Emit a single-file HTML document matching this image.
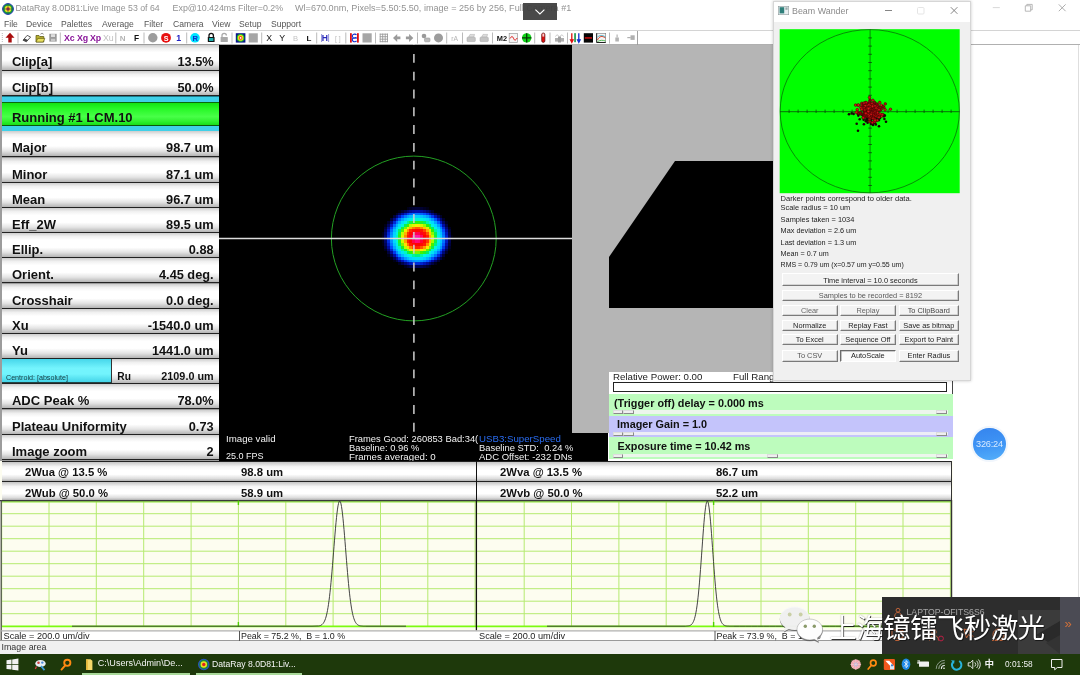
<!DOCTYPE html>
<html><head><meta charset="utf-8"><title>DataRay</title>
<style>
*{box-sizing:border-box;margin:0;padding:0}
html,body{width:1080px;height:675px;overflow:hidden;background:#fff;font-family:"Liberation Sans","Noto Sans CJK SC",sans-serif;}
.abs{position:absolute}
#root{position:relative;width:1080px;height:675px;overflow:hidden;background:#fff;filter:blur(0.35px)}
/* title */
.tt{top:2.300px;color:#929292;white-space:pre;line-height:12px}
#menu{left:0;top:18px;height:12px;font-size:8.6px;color:#555;white-space:pre;line-height:12px}
#menu span{position:absolute;top:0}
#tb{left:0;top:30px;width:1080px;height:15px;background:#fff;border-top:1px solid #d4d4d4;border-bottom:1px solid #b0b0b0}
/* left panel */
.row{position:absolute;left:1.7px;width:217.2px;height:25.4px;border-bottom:1.6px solid #222;
 background:linear-gradient(#cdcdcd 0%,#f0f0f0 14%,#fff 30%,#fff 60%,#e4e4e4 80%,#b4b4b4 100%);
 font-weight:bold;font-size:13px;color:#111;line-height:15px}
.row b{position:absolute;left:10.3px;top:9px}
.row i{position:absolute;right:5.3px;top:9px;font-style:normal;font-size:12.75px}
.ct{white-space:pre;line-height:11px}
.wrow{border-top:1.4px solid #222;background:linear-gradient(#c4c4c4 0%,#f6f6f6 25%,#fff 45%,#fff 65%,#dcdcdc 88%,#b0b0b0 100%);font-weight:bold;font-size:11.3px;line-height:13px;color:#111;white-space:pre}
.wb{background:#f3f3f3;border:1px solid #fff;border-right-color:#7a7a7a;border-bottom-color:#7a7a7a;box-shadow:inset -0.6px -0.6px 0 #b5b5b5;font-size:7.4px;text-align:center;white-space:pre}
.wb.sk{background:#fafafa;border-color:#6a6a6a #fff #fff #6a6a6a;box-shadow:inset 0.6px 0.6px 0 #999}
</style></head><body><div id="root">
<svg class="abs" style="left:1.500px;top:2.500px" width="12" height="12" viewBox="0 0 12 12"><circle cx="6" cy="6" r="5.400" fill="#1a9a30" stroke="#2038b8" stroke-width="1"/><circle cx="6" cy="6" r="3.300" fill="#e8e020"/><circle cx="6" cy="6" r="1.800" fill="#e02818"/><path d="M6 .5v11M.5 6h11" stroke="#103080" stroke-width=".5"/></svg>
<span class="abs tt" style="left:15.500px;font-size:8.780px">DataRay 8.0D81:Live Image 53 of 64</span><span class="abs tt" style="left:172.600px;font-size:8.860px">Exp@10.424ms Filter=0.2%</span><span class="abs tt" style="left:295px;font-size:9.110px">Wl=670.0nm, Pixels=5.50:5.50, image = 256 by 256, Full Camera #1</span>
<div class="abs" style="left:523.100px;top:3.300px;width:34px;height:16.500px;background:rgba(62,62,62,.94)"></div>
<svg class="abs" style="left:523px;top:3px" width="34" height="17" viewBox="523 3 34 17"><path d="M535.400 9.600l4.500 4.400 4.500-4.400" fill="none" stroke="#fff" stroke-width="1.100"/></svg>
<svg class="abs" style="left:985px;top:0" width="95" height="16" viewBox="985 0 95 16" fill="none"><path d="M992.800 7.600h7" stroke="#d4d4d4" stroke-width=".9"/><path d="M1025.300 5.800h5.400v5.400h-5.400zM1026.800 5.800v-1.400h5.400v5.400h-1.500" stroke="#b0b0b0" stroke-width=".9"/><path d="M1058.800 4.400l6.800 6.800M1065.600 4.400l-6.800 6.800" stroke="#a4a4a4" stroke-width=".9"/></svg>
<div id="menu" class="abs"><span style="left:4px">File</span><span style="left:26px">Device</span><span style="left:61px">Palettes</span><span style="left:102px">Average</span><span style="left:144px">Filter</span><span style="left:173px">Camera</span><span style="left:212px">View</span><span style="left:239px">Setup</span><span style="left:271px">Support</span></div>
<div id="tb" class="abs"></div>
<svg class="abs" style="left:0;top:31px" width="640" height="14" viewBox="0 31 640 14" font-family="Liberation Sans, sans-serif"><path d="M18.0 32.500v11M60.3 32.500v11M115.8 32.500v11M144.0 32.500v11M186.7 32.500v11M232.0 32.500v11M261.7 32.500v11M316.7 32.500v11M345.8 32.500v11M375.5 32.500v11M417.5 32.500v11M446.7 32.500v11M462.5 32.500v11M492.5 32.500v11M534.7 32.500v11M550.0 32.500v11M567.5 32.500v11M609.5 32.500v11" stroke="#a8a8a8" stroke-width="0.8" fill="none"/><path d="M637.500 31v14" stroke="#999" stroke-width="0.9"/><path d="M2.300 33v10" stroke="#bbb" stroke-width="1" stroke-dasharray="1 1"/><path d="M10 32.800l4.500 5h-2.800v4.800h-3.400v-4.800h-2.800z" fill="#a80c0c"/><path d="M23 40.200l4.200-4.800 3.400 1.600-4.200 4.800z" fill="#fff" stroke="#333" stroke-width=".8"/><path d="M23 40.200l1.600-1.800 3.400 1.600-1.600 1.800z" fill="#444"/><path d="M36 35.500h3l.8 1h4v5.500h-7.800z" fill="#b8b030" stroke="#55500a" stroke-width=".7"/><path d="M36 42l1.800-3.600h7l-1.600 3.600z" fill="#e8e060" stroke="#55500a" stroke-width=".6"/><path d="M40.500 34.200c1-1 2.200-1 3 0" stroke="#333" stroke-width=".6" fill="none"/><rect x="49.300" y="33.800" width="7.400" height="7.800" fill="#9a9a9a"/><rect x="51" y="34.200" width="4" height="2.800" fill="#ddd"/><rect x="51" y="38.800" width="4.200" height="2.800" fill="#c8c8c8"/><text x="64" y="41" font-size="8.8" font-weight="bold" fill="#8a169a" >Xc</text><text x="77" y="41" font-size="8.8" font-weight="bold" fill="#8a169a" >Xg</text><text x="90" y="41" font-size="8.8" font-weight="bold" fill="#8a169a" >Xp</text><text x="103" y="41" font-size="8.8" font-weight="normal" fill="#c0c0c0" >Xu</text><text x="119.8" y="41" font-size="8" font-weight="bold" fill="#b4b4b4" >N</text><text x="134" y="41" font-size="8.4" font-weight="bold" fill="#111" >F</text><circle cx="152.800" cy="37.800" r="4.700" fill="#9c9c9c"/><circle cx="166" cy="37.800" r="4.900" fill="#e81010"/><text x="163.8" y="40.5" font-size="7.2" font-weight="bold" fill="#fff" >S</text><text x="176.3" y="41" font-size="8.8" font-weight="bold" fill="#2222c4" >1</text><circle cx="195" cy="37.800" r="4.800" fill="#00e4ff"/><text x="192.4" y="40.8" font-size="7.6" font-weight="bold" fill="#1030d0" >R</text><path d="M209 37v-1.500a2.200 2.200 0 0 1 4.400 0v1.500" fill="none" stroke="#111" stroke-width="1.300"/><rect x="207.800" y="37" width="6.800" height="5" rx=".6" fill="#111"/><rect x="209" y="38" width="4.400" height="3" fill="#20b0b0"/><path d="M222 37v-1.500a2.200 2.200 0 0 1 4.400 0" fill="none" stroke="#aaa" stroke-width="1.300"/><rect x="220.600" y="37" width="7.200" height="5" rx=".6" fill="#a8a8a8"/><rect x="235.800" y="33.200" width="9.600" height="9.400" fill="#0a1a8a"/><circle cx="240.600" cy="37.900" r="3.800" fill="#20c020"/><circle cx="240.600" cy="37.900" r="2.800" fill="#f0e020"/><circle cx="240.600" cy="37.900" r="1.800" fill="#f04020"/><circle cx="240.600" cy="37.900" r=".900" fill="#fff"/><rect x="248.700" y="33.300" width="9.100" height="9.200" fill="#a6a6a6"/><text x="266.3" y="41.2" font-size="8.8" font-weight="normal" fill="#111" >X</text><text x="279.3" y="41.2" font-size="8.8" font-weight="normal" fill="#111" >Y</text><text x="293" y="41" font-size="7.6" font-weight="normal" fill="#c4c4c4" >B</text><text x="306.6" y="41" font-size="8" font-weight="bold" fill="#111" >L</text><text x="321.8" y="41" font-size="8.6" font-weight="bold" fill="#2828b8" >H</text><path d="M321.600 34v8M328.600 34v8" stroke="#2828b8" stroke-width=".5"/><text x="335" y="40.5" font-size="6.8" font-weight="normal" fill="#bbb" >[ ]</text><rect x="350" y="33.200" width="1.800" height="9.400" fill="#e01010"/><rect x="357" y="33.200" width="1.800" height="9.400" fill="#e01010"/><path d="M356.500 35a2.300 2 0 1 0 0 2.200M356.500 38.600a2.300 2 0 1 0 0 2.200" stroke="#1030d0" stroke-width="1.100" fill="none"/><rect x="362.500" y="33.300" width="9.200" height="9.200" fill="#a6a6a6"/><path d="M380.200 33.600v8.600M382.700 33.600v8.600M385.200 33.600v8.600M387.500 33.600v8.600M379.800 34.200h8M379.800 36.700h8M379.800 39.200h8M379.800 41.700h8" stroke="#9a9a9a" stroke-width=".9"/><path d="M393 37.900l4.200-4v2.600h3.200v2.800h-3.200v2.600z" fill="#9a9a9a"/><path d="M413.300 37.900l-4.200-4v2.600h-3.200v2.800h3.200v2.600z" fill="#9a9a9a"/><circle cx="424" cy="36" r="2.300" fill="#9a9a9a"/><rect x="424.500" y="38" width="5.500" height="3.800" rx="1" fill="#bbb" stroke="#999" stroke-width=".6"/><circle cx="438.500" cy="37.900" r="4.500" fill="#9c9c9c"/><text x="451.3" y="40.5" font-size="6.8" font-weight="normal" fill="#b4b4b4" >rA</text><path d="M468.5 37.200l1.500-2.800h4.600l-1 2.800z" fill="#ddd" stroke="#aaa" stroke-width=".5"/><rect x="467" y="37.200" width="8.300" height="4.400" rx=".8" fill="#c4c4c4" stroke="#a0a0a0" stroke-width=".5"/><path d="M481.5 37.200l1.500-2.800h4.600l-1 2.800z" fill="#ddd" stroke="#aaa" stroke-width=".5"/><rect x="480" y="37.200" width="8.300" height="4.400" rx=".8" fill="#c4c4c4" stroke="#a0a0a0" stroke-width=".5"/><text x="496.8" y="40.8" font-size="7.4" font-weight="bold" fill="#111" >M2</text><rect x="509.200" y="33.400" width="8.400" height="9" fill="#f4f4f4" stroke="#999" stroke-width=".7"/><path d="M510 38.500c1.500-2.500 2.600-2.500 3.600 0s2.200 1.800 3.500-.5" stroke="#e01010" stroke-width="1" fill="none"/><circle cx="526.700" cy="37.900" r="4.700" fill="#10d418"/><path d="M522 37.900h9.400M526.700 33.200v9.400" stroke="#083808" stroke-width="1.300"/><rect x="541.700" y="33" width="3.200" height="9.400" rx="1.600" fill="#e01010" stroke="#501010" stroke-width=".7"/><rect x="542.400" y="33.600" width="1.800" height="3" fill="#f8d0d0"/><rect x="555" y="38" width="9" height="3.600" fill="#b0b0b0"/><path d="M555.500 36.500c1-2 2.500-2 3.500 0M560 36.500c1-2 2.500-2 3.500 0" stroke="#b8b8b8" stroke-width=".8" fill="none"/><rect x="558" y="36.500" width="3" height="6" fill="#a0a0a0"/><path d="M571.800 33.200v7.600M570.500 39.800l1.300 2.600 1.300-2.600z" stroke="#e01010" stroke-width="1.300" fill="#e01010"/><path d="M575.500 33.200v9M574.600 33.200v9" stroke="#209a50" stroke-width=".9"/><path d="M578.800 33.200v7.600M577.500 39.800l1.300 2.600 1.300-2.600z" stroke="#1030d0" stroke-width="1.300" fill="#1030d0"/><rect x="583.800" y="33.200" width="9.200" height="9.400" fill="#050505"/><rect x="584.800" y="37.300" width="7.200" height="1.300" fill="#f01010"/><rect x="596.700" y="33.300" width="9" height="9.200" fill="#f4f4f4" stroke="#777" stroke-width=".6"/><path d="M596.700 33.300v9.200h9" stroke="#111" stroke-width=".9" fill="none"/><path d="M597.500 40c2-4 4.500-4.500 8-2" stroke="#e03010" stroke-width=".9" fill="none"/><path d="M597.500 37c2.500-2 5-2 8 0" stroke="#20a0c0" stroke-width=".8" fill="none"/><path d="M597.500 41.500c3-1.500 5-1.500 8-.5" stroke="#30b030" stroke-width=".8" fill="none"/><rect x="615.300" y="37.500" width="3.600" height="4" fill="#b4b4b4"/><rect x="616.500" y="34.500" width="1.200" height="3" fill="#b4b4b4"/><rect x="630.500" y="35.300" width="4.200" height="4.600" fill="#b0b0b0"/><rect x="627.300" y="37" width="3.400" height="1.200" fill="#b0b0b0"/></svg>
<!--LEFT-->
<div class="abs" style="left:0;top:44px;width:220px;height:417px;background:#9c9c9c"></div>
<div class="row" style="top:45.3px;height:25.6px"><b>Clip[a]</b><i>13.5%</i></div>
<div class="row" style="top:70.9px;height:25.5px"><b>Clip[b]</b><i>50.0%</i></div>
<div class="abs" style="left:1.7px;top:96.4px;width:217.2px;height:34.9px;background:#3fd0e8;border-top:1px solid #1a7f8f"></div>
<div class="abs" id="run" style="left:1.7px;top:101.7px;width:217.2px;height:24.6px;background:linear-gradient(#14e214,#26f826 25%,#48ff48 62%,#2cf02c 85%,#18dc18);border-top:1px solid #0a6a0a;border-bottom:1.5px solid #0a5a0a;font-weight:bold;font-size:13px;line-height:15px;color:#111"><span class="abs" style="left:10.3px;top:7.6px">Running #1 LCM.10</span></div>
<div class="row" style="top:131.3px;height:26.2px"><b>Major</b><i>98.7 um</i></div>
<div class="row" style="top:157.5px;height:25.2px"><b>Minor</b><i>87.1 um</i></div>
<div class="row" style="top:182.7px;height:25.2px"><b>Mean</b><i>96.7 um</i></div>
<div class="row" style="top:207.9px;height:25.2px"><b>Eff_2W</b><i>89.5 um</i></div>
<div class="row" style="top:233.1px;height:25.2px"><b>Ellip.</b><i>0.88</i></div>
<div class="row" style="top:258.3px;height:25.2px"><b>Orient.</b><i>4.45 deg.</i></div>
<div class="row" style="top:283.5px;height:25.2px"><b>Crosshair</b><i>0.0 deg.</i></div>
<div class="row" style="top:308.7px;height:25.2px"><b>Xu</b><i>-1540.0 um</i></div>
<div class="row" style="top:333.9px;height:25.2px"><b>Yu</b><i>1441.0 um</i></div>
<div class="row" style="top:359.1px;height:25.2px"><i style="font-size:10.8px;top:10px">2109.0 um</i><span class="abs" style="left:115.6px;top:10px;font-size:10.2px">Ru</span></div>
<div class="abs" style="left:1.7px;top:359.1px;width:110.3px;height:24.0px;background:linear-gradient(#46d6ea,#74f4fd 40%,#72f4fd 65%,#44d4e8);border-right:1.3px solid #333;border-bottom:1.3px solid #244"><span class="abs" style="left:4.3px;top:15.4px;font-size:7.15px;line-height:9px;color:#143a40;white-space:pre">Centroid: [absolute]</span></div>
<div class="row" style="top:384.3px;height:25.2px"><b>ADC Peak %</b><i>78.0%</i></div>
<div class="row" style="top:409.5px;height:25.2px"><b>Plateau Uniformity</b><i>0.73</i></div>
<div class="row" style="top:434.7px;height:25.2px"><b>Image zoom</b><i>2</i></div>
<!--/LEFT-->
<!--CAM-->
<div class="abs" style="left:219px;top:44.5px;width:353px;height:417px;background:#000"></div>
<div class="abs" style="left:219px;top:432.5px;width:389px;height:29px;background:#000"></div>
<svg class="abs" style="left:219px;top:44px" width="353" height="390" viewBox="219 44 353 390">
<defs><radialGradient id="beam" cx="0.5" cy="0.5" r="0.5">
<stop offset="0" stop-color="#ff10b0"/><stop offset="0.15" stop-color="#ff0078"/><stop offset="0.25" stop-color="#ff0000"/>
<stop offset="0.34" stop-color="#ff4800"/><stop offset="0.43" stop-color="#ffd800"/><stop offset="0.49" stop-color="#c8ff00"/>
<stop offset="0.56" stop-color="#20f020"/><stop offset="0.63" stop-color="#00f0b0"/><stop offset="0.70" stop-color="#00e0ff"/>
<stop offset="0.79" stop-color="#00a8ff"/><stop offset="0.86" stop-color="#0050ff"/><stop offset="0.92" stop-color="#0018b0"/><stop offset="1" stop-color="#000040" stop-opacity="0"/>
</radialGradient></defs>
<g shape-rendering="crispEdges"><rect x="406.53" y="207.21" width="2.800" height="2.800" fill="#000019"/><rect x="409.29" y="207.21" width="2.800" height="2.800" fill="#000127"/><rect x="412.05" y="207.21" width="2.800" height="2.800" fill="#000134"/><rect x="414.80" y="207.21" width="2.800" height="2.800" fill="#00023a"/><rect x="417.56" y="207.21" width="2.800" height="2.800" fill="#000239"/><rect x="420.32" y="207.21" width="2.800" height="2.800" fill="#000131"/><rect x="423.08" y="207.21" width="2.800" height="2.800" fill="#000023"/><rect x="425.84" y="207.21" width="2.800" height="2.800" fill="#000016"/><rect x="398.26" y="209.97" width="2.800" height="2.800" fill="#000013"/><rect x="401.02" y="209.97" width="2.800" height="2.800" fill="#000130"/><rect x="403.77" y="209.97" width="2.800" height="2.800" fill="#000352"/><rect x="406.53" y="209.97" width="2.800" height="2.800" fill="#000775"/><rect x="409.29" y="209.97" width="2.800" height="2.800" fill="#000b93"/><rect x="412.05" y="209.97" width="2.800" height="2.800" fill="#000da7"/><rect x="414.80" y="209.97" width="2.800" height="2.800" fill="#000fb0"/><rect x="417.56" y="209.97" width="2.800" height="2.800" fill="#000eaf"/><rect x="420.32" y="209.97" width="2.800" height="2.800" fill="#000da3"/><rect x="423.08" y="209.97" width="2.800" height="2.800" fill="#000a8c"/><rect x="425.84" y="209.97" width="2.800" height="2.800" fill="#00066c"/><rect x="428.59" y="209.97" width="2.800" height="2.800" fill="#000349"/><rect x="431.35" y="209.97" width="2.800" height="2.800" fill="#000126"/><rect x="395.50" y="212.73" width="2.800" height="2.800" fill="#000128"/><rect x="398.26" y="212.73" width="2.800" height="2.800" fill="#000458"/><rect x="401.02" y="212.73" width="2.800" height="2.800" fill="#000b93"/><rect x="403.77" y="212.73" width="2.800" height="2.800" fill="#001ec6"/><rect x="406.53" y="212.73" width="2.800" height="2.800" fill="#003bef"/><rect x="409.29" y="212.73" width="2.800" height="2.800" fill="#0055ff"/><rect x="412.05" y="212.73" width="2.800" height="2.800" fill="#006aff"/><rect x="414.80" y="212.73" width="2.800" height="2.800" fill="#0073ff"/><rect x="417.56" y="212.73" width="2.800" height="2.800" fill="#0072ff"/><rect x="420.32" y="212.73" width="2.800" height="2.800" fill="#0065ff"/><rect x="423.08" y="212.73" width="2.800" height="2.800" fill="#004eff"/><rect x="425.84" y="212.73" width="2.800" height="2.800" fill="#0034e5"/><rect x="428.59" y="212.73" width="2.800" height="2.800" fill="#0016ba"/><rect x="431.35" y="212.73" width="2.800" height="2.800" fill="#000984"/><rect x="434.11" y="212.73" width="2.800" height="2.800" fill="#00034b"/><rect x="436.87" y="212.73" width="2.800" height="2.800" fill="#00001c"/><rect x="392.74" y="215.48" width="2.800" height="2.800" fill="#000239"/><rect x="395.50" y="215.48" width="2.800" height="2.800" fill="#00087a"/><rect x="398.26" y="215.48" width="2.800" height="2.800" fill="#001bc1"/><rect x="401.02" y="215.48" width="2.800" height="2.800" fill="#0047ff"/><rect x="403.77" y="215.48" width="2.800" height="2.800" fill="#007dff"/><rect x="406.53" y="215.48" width="2.800" height="2.800" fill="#00a3ff"/><rect x="409.29" y="215.48" width="2.800" height="2.800" fill="#00baff"/><rect x="412.05" y="215.48" width="2.800" height="2.800" fill="#00c9ff"/><rect x="414.80" y="215.48" width="2.800" height="2.800" fill="#00d0ff"/><rect x="417.56" y="215.48" width="2.800" height="2.800" fill="#00cfff"/><rect x="420.32" y="215.48" width="2.800" height="2.800" fill="#00c6ff"/><rect x="423.08" y="215.48" width="2.800" height="2.800" fill="#00b4ff"/><rect x="425.84" y="215.48" width="2.800" height="2.800" fill="#009cff"/><rect x="428.59" y="215.48" width="2.800" height="2.800" fill="#006fff"/><rect x="431.35" y="215.48" width="2.800" height="2.800" fill="#003bf0"/><rect x="434.11" y="215.48" width="2.800" height="2.800" fill="#000fb0"/><rect x="436.87" y="215.48" width="2.800" height="2.800" fill="#000565"/><rect x="439.62" y="215.48" width="2.800" height="2.800" fill="#000129"/><rect x="389.98" y="218.24" width="2.800" height="2.800" fill="#00023a"/><rect x="392.74" y="218.24" width="2.800" height="2.800" fill="#000986"/><rect x="395.50" y="218.24" width="2.800" height="2.800" fill="#002bd8"/><rect x="398.26" y="218.24" width="2.800" height="2.800" fill="#006aff"/><rect x="401.02" y="218.24" width="2.800" height="2.800" fill="#00a5ff"/><rect x="403.77" y="218.24" width="2.800" height="2.800" fill="#00ccff"/><rect x="406.53" y="218.24" width="2.800" height="2.800" fill="#00e2f4"/><rect x="409.29" y="218.24" width="2.800" height="2.800" fill="#00efe7"/><rect x="412.05" y="218.24" width="2.800" height="2.800" fill="#00f8de"/><rect x="414.80" y="218.24" width="2.800" height="2.800" fill="#00f9d2"/><rect x="417.56" y="218.24" width="2.800" height="2.800" fill="#00f9d6"/><rect x="420.32" y="218.24" width="2.800" height="2.800" fill="#00f6e0"/><rect x="423.08" y="218.24" width="2.800" height="2.800" fill="#00ecea"/><rect x="425.84" y="218.24" width="2.800" height="2.800" fill="#00def8"/><rect x="428.59" y="218.24" width="2.800" height="2.800" fill="#00c3ff"/><rect x="431.35" y="218.24" width="2.800" height="2.800" fill="#009aff"/><rect x="434.11" y="218.24" width="2.800" height="2.800" fill="#0057ff"/><rect x="436.87" y="218.24" width="2.800" height="2.800" fill="#001cc4"/><rect x="439.62" y="218.24" width="2.800" height="2.800" fill="#00066f"/><rect x="442.38" y="218.24" width="2.800" height="2.800" fill="#000129"/><rect x="387.23" y="221.00" width="2.800" height="2.800" fill="#00012b"/><rect x="389.98" y="221.00" width="2.800" height="2.800" fill="#00087b"/><rect x="392.74" y="221.00" width="2.800" height="2.800" fill="#002ad7"/><rect x="395.50" y="221.00" width="2.800" height="2.800" fill="#0074ff"/><rect x="398.26" y="221.00" width="2.800" height="2.800" fill="#00b4ff"/><rect x="401.02" y="221.00" width="2.800" height="2.800" fill="#00def8"/><rect x="403.77" y="221.00" width="2.800" height="2.800" fill="#00f4e2"/><rect x="406.53" y="221.00" width="2.800" height="2.800" fill="#00f491"/><rect x="409.29" y="221.00" width="2.800" height="2.800" fill="#0ef047"/><rect x="412.05" y="221.00" width="2.800" height="2.800" fill="#22f021"/><rect x="414.80" y="221.00" width="2.800" height="2.800" fill="#2bf00e"/><rect x="417.56" y="221.00" width="2.800" height="2.800" fill="#2af011"/><rect x="420.32" y="221.00" width="2.800" height="2.800" fill="#1ef029"/><rect x="423.08" y="221.00" width="2.800" height="2.800" fill="#08f055"/><rect x="425.84" y="221.00" width="2.800" height="2.800" fill="#00f6ad"/><rect x="428.59" y="221.00" width="2.800" height="2.800" fill="#00eee8"/><rect x="431.35" y="221.00" width="2.800" height="2.800" fill="#00d8fe"/><rect x="434.11" y="221.00" width="2.800" height="2.800" fill="#00a7ff"/><rect x="436.87" y="221.00" width="2.800" height="2.800" fill="#005eff"/><rect x="439.62" y="221.00" width="2.800" height="2.800" fill="#001ac0"/><rect x="442.38" y="221.00" width="2.800" height="2.800" fill="#000561"/><rect x="445.14" y="221.00" width="2.800" height="2.800" fill="#00001b"/><rect x="384.47" y="223.76" width="2.800" height="2.800" fill="#000016"/><rect x="387.23" y="223.76" width="2.800" height="2.800" fill="#000459"/><rect x="389.98" y="223.76" width="2.800" height="2.800" fill="#0019bf"/><rect x="392.74" y="223.76" width="2.800" height="2.800" fill="#0065ff"/><rect x="395.50" y="223.76" width="2.800" height="2.800" fill="#00b2ff"/><rect x="398.26" y="223.76" width="2.800" height="2.800" fill="#00e1f5"/><rect x="401.02" y="223.76" width="2.800" height="2.800" fill="#00f9d3"/><rect x="403.77" y="223.76" width="2.800" height="2.800" fill="#0cf04c"/><rect x="406.53" y="223.76" width="2.800" height="2.800" fill="#3df100"/><rect x="409.29" y="223.76" width="2.800" height="2.800" fill="#b8fe00"/><rect x="412.05" y="223.76" width="2.800" height="2.800" fill="#e3f400"/><rect x="414.80" y="223.76" width="2.800" height="2.800" fill="#f7ee00"/><rect x="417.56" y="223.76" width="2.800" height="2.800" fill="#f4ee00"/><rect x="420.32" y="223.76" width="2.800" height="2.800" fill="#dbf600"/><rect x="423.08" y="223.76" width="2.800" height="2.800" fill="#9bfb00"/><rect x="425.84" y="223.76" width="2.800" height="2.800" fill="#2bf00e"/><rect x="428.59" y="223.76" width="2.800" height="2.800" fill="#00f063"/><rect x="431.35" y="223.76" width="2.800" height="2.800" fill="#00f5e1"/><rect x="434.11" y="223.76" width="2.800" height="2.800" fill="#00d9fd"/><rect x="436.87" y="223.76" width="2.800" height="2.800" fill="#00a2ff"/><rect x="439.62" y="223.76" width="2.800" height="2.800" fill="#004cff"/><rect x="442.38" y="223.76" width="2.800" height="2.800" fill="#000da5"/><rect x="445.14" y="223.76" width="2.800" height="2.800" fill="#000345"/><rect x="384.47" y="226.52" width="2.800" height="2.800" fill="#000132"/><rect x="387.23" y="226.52" width="2.800" height="2.800" fill="#000a8e"/><rect x="389.98" y="226.52" width="2.800" height="2.800" fill="#0040f6"/><rect x="392.74" y="226.52" width="2.800" height="2.800" fill="#009dff"/><rect x="395.50" y="226.52" width="2.800" height="2.800" fill="#00dafc"/><rect x="398.26" y="226.52" width="2.800" height="2.800" fill="#00f9dd"/><rect x="401.02" y="226.52" width="2.800" height="2.800" fill="#10f044"/><rect x="403.77" y="226.52" width="2.800" height="2.800" fill="#78f700"/><rect x="406.53" y="226.52" width="2.800" height="2.800" fill="#eff000"/><rect x="409.29" y="226.52" width="2.800" height="2.800" fill="#ffb200"/><rect x="412.05" y="226.52" width="2.800" height="2.800" fill="#ff7a00"/><rect x="414.80" y="226.52" width="2.800" height="2.800" fill="#ff5a00"/><rect x="417.56" y="226.52" width="2.800" height="2.800" fill="#ff5f00"/><rect x="420.32" y="226.52" width="2.800" height="2.800" fill="#ff8700"/><rect x="423.08" y="226.52" width="2.800" height="2.800" fill="#ffc400"/><rect x="425.84" y="226.52" width="2.800" height="2.800" fill="#dbf600"/><rect x="428.59" y="226.52" width="2.800" height="2.800" fill="#46f200"/><rect x="431.35" y="226.52" width="2.800" height="2.800" fill="#02f061"/><rect x="434.11" y="226.52" width="2.800" height="2.800" fill="#00f1e5"/><rect x="436.87" y="226.52" width="2.800" height="2.800" fill="#00ccff"/><rect x="439.62" y="226.52" width="2.800" height="2.800" fill="#0087ff"/><rect x="442.38" y="226.52" width="2.800" height="2.800" fill="#002ddc"/><rect x="445.14" y="226.52" width="2.800" height="2.800" fill="#000772"/><rect x="447.90" y="226.52" width="2.800" height="2.800" fill="#00001e"/><rect x="384.47" y="229.27" width="2.800" height="2.800" fill="#00034d"/><rect x="387.23" y="229.27" width="2.800" height="2.800" fill="#0015b9"/><rect x="389.98" y="229.27" width="2.800" height="2.800" fill="#0069ff"/><rect x="392.74" y="229.27" width="2.800" height="2.800" fill="#00bdff"/><rect x="395.50" y="229.27" width="2.800" height="2.800" fill="#00ebeb"/><rect x="398.26" y="229.27" width="2.800" height="2.800" fill="#00f16d"/><rect x="401.02" y="229.27" width="2.800" height="2.800" fill="#53f300"/><rect x="403.77" y="229.27" width="2.800" height="2.800" fill="#f2ef00"/><rect x="406.53" y="229.27" width="2.800" height="2.800" fill="#ff9200"/><rect x="409.29" y="229.27" width="2.800" height="2.800" fill="#ff2b00"/><rect x="412.05" y="229.27" width="2.800" height="2.800" fill="#ff1100"/><rect x="414.80" y="229.27" width="2.800" height="2.800" fill="#ff0900"/><rect x="417.56" y="229.27" width="2.800" height="2.800" fill="#ff0a00"/><rect x="420.32" y="229.27" width="2.800" height="2.800" fill="#ff1400"/><rect x="423.08" y="229.27" width="2.800" height="2.800" fill="#ff4400"/><rect x="425.84" y="229.27" width="2.800" height="2.800" fill="#ffac00"/><rect x="428.59" y="229.27" width="2.800" height="2.800" fill="#d8f700"/><rect x="431.35" y="229.27" width="2.800" height="2.800" fill="#2bf00e"/><rect x="434.11" y="229.27" width="2.800" height="2.800" fill="#00f5a1"/><rect x="436.87" y="229.27" width="2.800" height="2.800" fill="#00e3f3"/><rect x="439.62" y="229.27" width="2.800" height="2.800" fill="#00abff"/><rect x="442.38" y="229.27" width="2.800" height="2.800" fill="#004dff"/><rect x="445.14" y="229.27" width="2.800" height="2.800" fill="#000c9b"/><rect x="447.90" y="229.27" width="2.800" height="2.800" fill="#000238"/><rect x="381.71" y="232.03" width="2.800" height="2.800" fill="#000017"/><rect x="384.47" y="232.03" width="2.800" height="2.800" fill="#000564"/><rect x="387.23" y="232.03" width="2.800" height="2.800" fill="#0028d5"/><rect x="389.98" y="232.03" width="2.800" height="2.800" fill="#0088ff"/><rect x="392.74" y="232.03" width="2.800" height="2.800" fill="#00d3ff"/><rect x="395.50" y="232.03" width="2.800" height="2.800" fill="#00f8de"/><rect x="398.26" y="232.03" width="2.800" height="2.800" fill="#19f032"/><rect x="401.02" y="232.03" width="2.800" height="2.800" fill="#c3fd00"/><rect x="403.77" y="232.03" width="2.800" height="2.800" fill="#ffb200"/><rect x="406.53" y="232.03" width="2.800" height="2.800" fill="#ff3000"/><rect x="409.29" y="232.03" width="2.800" height="2.800" fill="#ff0900"/><rect x="412.05" y="232.03" width="2.800" height="2.800" fill="#ff002b"/><rect x="414.80" y="232.03" width="2.800" height="2.800" fill="#ff0355"/><rect x="417.56" y="232.03" width="2.800" height="2.800" fill="#ff034e"/><rect x="420.32" y="232.03" width="2.800" height="2.800" fill="#ff0019"/><rect x="423.08" y="232.03" width="2.800" height="2.800" fill="#ff0f00"/><rect x="425.84" y="232.03" width="2.800" height="2.800" fill="#ff5300"/><rect x="428.59" y="232.03" width="2.800" height="2.800" fill="#ffd200"/><rect x="431.35" y="232.03" width="2.800" height="2.800" fill="#89f900"/><rect x="434.11" y="232.03" width="2.800" height="2.800" fill="#07f055"/><rect x="436.87" y="232.03" width="2.800" height="2.800" fill="#00efe7"/><rect x="439.62" y="232.03" width="2.800" height="2.800" fill="#00c1ff"/><rect x="442.38" y="232.03" width="2.800" height="2.800" fill="#006cff"/><rect x="445.14" y="232.03" width="2.800" height="2.800" fill="#0014b8"/><rect x="447.90" y="232.03" width="2.800" height="2.800" fill="#00034b"/><rect x="381.71" y="234.79" width="2.800" height="2.800" fill="#00001b"/><rect x="384.47" y="234.79" width="2.800" height="2.800" fill="#000773"/><rect x="387.23" y="234.79" width="2.800" height="2.800" fill="#0033e4"/><rect x="389.98" y="234.79" width="2.800" height="2.800" fill="#0098ff"/><rect x="392.74" y="234.79" width="2.800" height="2.800" fill="#00dbfb"/><rect x="395.50" y="234.79" width="2.800" height="2.800" fill="#00f8be"/><rect x="398.26" y="234.79" width="2.800" height="2.800" fill="#28f013"/><rect x="401.02" y="234.79" width="2.800" height="2.800" fill="#e3f400"/><rect x="403.77" y="234.79" width="2.800" height="2.800" fill="#ff8800"/><rect x="406.53" y="234.79" width="2.800" height="2.800" fill="#ff1600"/><rect x="409.29" y="234.79" width="2.800" height="2.800" fill="#ff0019"/><rect x="412.05" y="234.79" width="2.800" height="2.800" fill="#ff0778"/><rect x="414.80" y="234.79" width="2.800" height="2.800" fill="#ff18a9"/><rect x="417.56" y="234.79" width="2.800" height="2.800" fill="#ff13a3"/><rect x="420.32" y="234.79" width="2.800" height="2.800" fill="#ff0560"/><rect x="423.08" y="234.79" width="2.800" height="2.800" fill="#ff0000"/><rect x="425.84" y="234.79" width="2.800" height="2.800" fill="#ff1d00"/><rect x="428.59" y="234.79" width="2.800" height="2.800" fill="#ffaa00"/><rect x="431.35" y="234.79" width="2.800" height="2.800" fill="#c4fd00"/><rect x="434.11" y="234.79" width="2.800" height="2.800" fill="#16f037"/><rect x="436.87" y="234.79" width="2.800" height="2.800" fill="#00f6e0"/><rect x="439.62" y="234.79" width="2.800" height="2.800" fill="#00cdff"/><rect x="442.38" y="234.79" width="2.800" height="2.800" fill="#007cff"/><rect x="445.14" y="234.79" width="2.800" height="2.800" fill="#001fc7"/><rect x="447.90" y="234.79" width="2.800" height="2.800" fill="#000456"/><rect x="450.66" y="234.79" width="2.800" height="2.800" fill="#000011"/><rect x="381.71" y="237.55" width="2.800" height="2.800" fill="#00001c"/><rect x="384.47" y="237.55" width="2.800" height="2.800" fill="#000775"/><rect x="387.23" y="237.55" width="2.800" height="2.800" fill="#0035e6"/><rect x="389.98" y="237.55" width="2.800" height="2.800" fill="#009aff"/><rect x="392.74" y="237.55" width="2.800" height="2.800" fill="#00dcfa"/><rect x="395.50" y="237.55" width="2.800" height="2.800" fill="#00f7b8"/><rect x="398.26" y="237.55" width="2.800" height="2.800" fill="#2bf00f"/><rect x="401.02" y="237.55" width="2.800" height="2.800" fill="#e8f200"/><rect x="403.77" y="237.55" width="2.800" height="2.800" fill="#ff8100"/><rect x="406.53" y="237.55" width="2.800" height="2.800" fill="#ff1400"/><rect x="409.29" y="237.55" width="2.800" height="2.800" fill="#ff0022"/><rect x="412.05" y="237.55" width="2.800" height="2.800" fill="#ff0887"/><rect x="414.80" y="237.55" width="2.800" height="2.800" fill="#ff21b6"/><rect x="417.56" y="237.55" width="2.800" height="2.800" fill="#ff1bad"/><rect x="420.32" y="237.55" width="2.800" height="2.800" fill="#ff066d"/><rect x="423.08" y="237.55" width="2.800" height="2.800" fill="#ff0006"/><rect x="425.84" y="237.55" width="2.800" height="2.800" fill="#ff1c00"/><rect x="428.59" y="237.55" width="2.800" height="2.800" fill="#ffa400"/><rect x="431.35" y="237.55" width="2.800" height="2.800" fill="#c8fc00"/><rect x="434.11" y="237.55" width="2.800" height="2.800" fill="#19f033"/><rect x="436.87" y="237.55" width="2.800" height="2.800" fill="#00f6e0"/><rect x="439.62" y="237.55" width="2.800" height="2.800" fill="#00cfff"/><rect x="442.38" y="237.55" width="2.800" height="2.800" fill="#007fff"/><rect x="445.14" y="237.55" width="2.800" height="2.800" fill="#0021c9"/><rect x="447.90" y="237.55" width="2.800" height="2.800" fill="#000457"/><rect x="450.66" y="237.55" width="2.800" height="2.800" fill="#000011"/><rect x="381.71" y="240.30" width="2.800" height="2.800" fill="#000019"/><rect x="384.47" y="240.30" width="2.800" height="2.800" fill="#00066a"/><rect x="387.23" y="240.30" width="2.800" height="2.800" fill="#002ddb"/><rect x="389.98" y="240.30" width="2.800" height="2.800" fill="#008fff"/><rect x="392.74" y="240.30" width="2.800" height="2.800" fill="#00d8fe"/><rect x="395.50" y="240.30" width="2.800" height="2.800" fill="#00fad7"/><rect x="398.26" y="240.30" width="2.800" height="2.800" fill="#1ff025"/><rect x="401.02" y="240.30" width="2.800" height="2.800" fill="#d0f900"/><rect x="403.77" y="240.30" width="2.800" height="2.800" fill="#ffa100"/><rect x="406.53" y="240.30" width="2.800" height="2.800" fill="#ff1d00"/><rect x="409.29" y="240.30" width="2.800" height="2.800" fill="#ff0200"/><rect x="412.05" y="240.30" width="2.800" height="2.800" fill="#ff0248"/><rect x="414.80" y="240.30" width="2.800" height="2.800" fill="#ff077a"/><rect x="417.56" y="240.30" width="2.800" height="2.800" fill="#ff0671"/><rect x="420.32" y="240.30" width="2.800" height="2.800" fill="#ff0035"/><rect x="423.08" y="240.30" width="2.800" height="2.800" fill="#ff0900"/><rect x="425.84" y="240.30" width="2.800" height="2.800" fill="#ff3c00"/><rect x="428.59" y="240.30" width="2.800" height="2.800" fill="#ffc200"/><rect x="431.35" y="240.30" width="2.800" height="2.800" fill="#a5fc00"/><rect x="434.11" y="240.30" width="2.800" height="2.800" fill="#0ef049"/><rect x="436.87" y="240.30" width="2.800" height="2.800" fill="#00f2e4"/><rect x="439.62" y="240.30" width="2.800" height="2.800" fill="#00c6ff"/><rect x="442.38" y="240.30" width="2.800" height="2.800" fill="#0073ff"/><rect x="445.14" y="240.30" width="2.800" height="2.800" fill="#0019bf"/><rect x="447.90" y="240.30" width="2.800" height="2.800" fill="#000350"/><rect x="381.71" y="243.06" width="2.800" height="2.800" fill="#000011"/><rect x="384.47" y="243.06" width="2.800" height="2.800" fill="#000455"/><rect x="387.23" y="243.06" width="2.800" height="2.800" fill="#001cc3"/><rect x="389.98" y="243.06" width="2.800" height="2.800" fill="#0075ff"/><rect x="392.74" y="243.06" width="2.800" height="2.800" fill="#00c5ff"/><rect x="395.50" y="243.06" width="2.800" height="2.800" fill="#00f0e6"/><rect x="398.26" y="243.06" width="2.800" height="2.800" fill="#08f055"/><rect x="401.02" y="243.06" width="2.800" height="2.800" fill="#7ff800"/><rect x="403.77" y="243.06" width="2.800" height="2.800" fill="#ffdf00"/><rect x="406.53" y="243.06" width="2.800" height="2.800" fill="#ff6f00"/><rect x="409.29" y="243.06" width="2.800" height="2.800" fill="#ff1800"/><rect x="412.05" y="243.06" width="2.800" height="2.800" fill="#ff0700"/><rect x="414.80" y="243.06" width="2.800" height="2.800" fill="#ff0007"/><rect x="417.56" y="243.06" width="2.800" height="2.800" fill="#ff0002"/><rect x="420.32" y="243.06" width="2.800" height="2.800" fill="#ff0b00"/><rect x="423.08" y="243.06" width="2.800" height="2.800" fill="#ff1d00"/><rect x="425.84" y="243.06" width="2.800" height="2.800" fill="#ff8f00"/><rect x="428.59" y="243.06" width="2.800" height="2.800" fill="#eff000"/><rect x="431.35" y="243.06" width="2.800" height="2.800" fill="#41f200"/><rect x="434.11" y="243.06" width="2.800" height="2.800" fill="#00f281"/><rect x="436.87" y="243.06" width="2.800" height="2.800" fill="#00e7ef"/><rect x="439.62" y="243.06" width="2.800" height="2.800" fill="#00b3ff"/><rect x="442.38" y="243.06" width="2.800" height="2.800" fill="#0059ff"/><rect x="445.14" y="243.06" width="2.800" height="2.800" fill="#000da7"/><rect x="447.90" y="243.06" width="2.800" height="2.800" fill="#00023f"/><rect x="384.47" y="245.82" width="2.800" height="2.800" fill="#00023c"/><rect x="387.23" y="245.82" width="2.800" height="2.800" fill="#000c9e"/><rect x="389.98" y="245.82" width="2.800" height="2.800" fill="#004dff"/><rect x="392.74" y="245.82" width="2.800" height="2.800" fill="#00a9ff"/><rect x="395.50" y="245.82" width="2.800" height="2.800" fill="#00e0f6"/><rect x="398.26" y="245.82" width="2.800" height="2.800" fill="#00f7ba"/><rect x="401.02" y="245.82" width="2.800" height="2.800" fill="#1ff026"/><rect x="403.77" y="245.82" width="2.800" height="2.800" fill="#b7fe00"/><rect x="406.53" y="245.82" width="2.800" height="2.800" fill="#ffd800"/><rect x="409.29" y="245.82" width="2.800" height="2.800" fill="#ff8800"/><rect x="412.05" y="245.82" width="2.800" height="2.800" fill="#ff4500"/><rect x="414.80" y="245.82" width="2.800" height="2.800" fill="#ff2300"/><rect x="417.56" y="245.82" width="2.800" height="2.800" fill="#ff2800"/><rect x="420.32" y="245.82" width="2.800" height="2.800" fill="#ff5400"/><rect x="423.08" y="245.82" width="2.800" height="2.800" fill="#ff9c00"/><rect x="425.84" y="245.82" width="2.800" height="2.800" fill="#fbec00"/><rect x="428.59" y="245.82" width="2.800" height="2.800" fill="#83f900"/><rect x="431.35" y="245.82" width="2.800" height="2.800" fill="#10f044"/><rect x="434.11" y="245.82" width="2.800" height="2.800" fill="#00f7df"/><rect x="436.87" y="245.82" width="2.800" height="2.800" fill="#00d8fe"/><rect x="439.62" y="245.82" width="2.800" height="2.800" fill="#0097ff"/><rect x="442.38" y="245.82" width="2.800" height="2.800" fill="#0038eb"/><rect x="445.14" y="245.82" width="2.800" height="2.800" fill="#000981"/><rect x="447.90" y="245.82" width="2.800" height="2.800" fill="#000127"/><rect x="384.47" y="248.58" width="2.800" height="2.800" fill="#00001c"/><rect x="387.23" y="248.58" width="2.800" height="2.800" fill="#00066b"/><rect x="389.98" y="248.58" width="2.800" height="2.800" fill="#0027d2"/><rect x="392.74" y="248.58" width="2.800" height="2.800" fill="#007aff"/><rect x="395.50" y="248.58" width="2.800" height="2.800" fill="#00c1ff"/><rect x="398.26" y="248.58" width="2.800" height="2.800" fill="#00e9ed"/><rect x="401.02" y="248.58" width="2.800" height="2.800" fill="#00f59b"/><rect x="403.77" y="248.58" width="2.800" height="2.800" fill="#1ff025"/><rect x="406.53" y="248.58" width="2.800" height="2.800" fill="#8cfa00"/><rect x="409.29" y="248.58" width="2.800" height="2.800" fill="#e3f400"/><rect x="412.05" y="248.58" width="2.800" height="2.800" fill="#ffdb00"/><rect x="414.80" y="248.58" width="2.800" height="2.800" fill="#ffc400"/><rect x="417.56" y="248.58" width="2.800" height="2.800" fill="#ffc700"/><rect x="420.32" y="248.58" width="2.800" height="2.800" fill="#ffe500"/><rect x="423.08" y="248.58" width="2.800" height="2.800" fill="#d5f800"/><rect x="425.84" y="248.58" width="2.800" height="2.800" fill="#65f500"/><rect x="428.59" y="248.58" width="2.800" height="2.800" fill="#13f03e"/><rect x="431.35" y="248.58" width="2.800" height="2.800" fill="#00f8c7"/><rect x="434.11" y="248.58" width="2.800" height="2.800" fill="#00e1f5"/><rect x="436.87" y="248.58" width="2.800" height="2.800" fill="#00b1ff"/><rect x="439.62" y="248.58" width="2.800" height="2.800" fill="#0061ff"/><rect x="442.38" y="248.58" width="2.800" height="2.800" fill="#0015b8"/><rect x="445.14" y="248.58" width="2.800" height="2.800" fill="#000352"/><rect x="447.90" y="248.58" width="2.800" height="2.800" fill="#000012"/><rect x="387.23" y="251.34" width="2.800" height="2.800" fill="#00023b"/><rect x="389.98" y="251.34" width="2.800" height="2.800" fill="#000b92"/><rect x="392.74" y="251.34" width="2.800" height="2.800" fill="#003bef"/><rect x="395.50" y="251.34" width="2.800" height="2.800" fill="#008eff"/><rect x="398.26" y="251.34" width="2.800" height="2.800" fill="#00c7ff"/><rect x="401.02" y="251.34" width="2.800" height="2.800" fill="#00e8ee"/><rect x="403.77" y="251.34" width="2.800" height="2.800" fill="#00f8c1"/><rect x="406.53" y="251.34" width="2.800" height="2.800" fill="#08f053"/><rect x="409.29" y="251.34" width="2.800" height="2.800" fill="#26f018"/><rect x="412.05" y="251.34" width="2.800" height="2.800" fill="#52f300"/><rect x="414.80" y="251.34" width="2.800" height="2.800" fill="#77f700"/><rect x="417.56" y="251.34" width="2.800" height="2.800" fill="#71f700"/><rect x="420.32" y="251.34" width="2.800" height="2.800" fill="#41f200"/><rect x="423.08" y="251.34" width="2.800" height="2.800" fill="#1ff026"/><rect x="425.84" y="251.34" width="2.800" height="2.800" fill="#00f066"/><rect x="428.59" y="251.34" width="2.800" height="2.800" fill="#00f9dd"/><rect x="431.35" y="251.34" width="2.800" height="2.800" fill="#00e2f4"/><rect x="434.11" y="251.34" width="2.800" height="2.800" fill="#00b9ff"/><rect x="436.87" y="251.34" width="2.800" height="2.800" fill="#0077ff"/><rect x="439.62" y="251.34" width="2.800" height="2.800" fill="#002ad8"/><rect x="442.38" y="251.34" width="2.800" height="2.800" fill="#000878"/><rect x="445.14" y="251.34" width="2.800" height="2.800" fill="#000128"/><rect x="387.23" y="254.09" width="2.800" height="2.800" fill="#000014"/><rect x="389.98" y="254.09" width="2.800" height="2.800" fill="#00034d"/><rect x="392.74" y="254.09" width="2.800" height="2.800" fill="#000da2"/><rect x="395.50" y="254.09" width="2.800" height="2.800" fill="#003ff5"/><rect x="398.26" y="254.09" width="2.800" height="2.800" fill="#0088ff"/><rect x="401.02" y="254.09" width="2.800" height="2.800" fill="#00bbff"/><rect x="403.77" y="254.09" width="2.800" height="2.800" fill="#00ddf9"/><rect x="406.53" y="254.09" width="2.800" height="2.800" fill="#00eee8"/><rect x="409.29" y="254.09" width="2.800" height="2.800" fill="#00f9d3"/><rect x="412.05" y="254.09" width="2.800" height="2.800" fill="#00f59b"/><rect x="414.80" y="254.09" width="2.800" height="2.800" fill="#00f281"/><rect x="417.56" y="254.09" width="2.800" height="2.800" fill="#00f385"/><rect x="420.32" y="254.09" width="2.800" height="2.800" fill="#00f6a7"/><rect x="423.08" y="254.09" width="2.800" height="2.800" fill="#00f8de"/><rect x="425.84" y="254.09" width="2.800" height="2.800" fill="#00eaec"/><rect x="428.59" y="254.09" width="2.800" height="2.800" fill="#00d8fe"/><rect x="431.35" y="254.09" width="2.800" height="2.800" fill="#00afff"/><rect x="434.11" y="254.09" width="2.800" height="2.800" fill="#0075ff"/><rect x="436.87" y="254.09" width="2.800" height="2.800" fill="#0030e0"/><rect x="439.62" y="254.09" width="2.800" height="2.800" fill="#000a8b"/><rect x="442.38" y="254.09" width="2.800" height="2.800" fill="#00023b"/><rect x="389.98" y="256.85" width="2.800" height="2.800" fill="#000018"/><rect x="392.74" y="256.85" width="2.800" height="2.800" fill="#00034e"/><rect x="395.50" y="256.85" width="2.800" height="2.800" fill="#000c9a"/><rect x="398.26" y="256.85" width="2.800" height="2.800" fill="#0032e2"/><rect x="401.02" y="256.85" width="2.800" height="2.800" fill="#0069ff"/><rect x="403.77" y="256.85" width="2.800" height="2.800" fill="#009dff"/><rect x="406.53" y="256.85" width="2.800" height="2.800" fill="#00bcff"/><rect x="409.29" y="256.85" width="2.800" height="2.800" fill="#00d3ff"/><rect x="412.05" y="256.85" width="2.800" height="2.800" fill="#00ddf9"/><rect x="414.80" y="256.85" width="2.800" height="2.800" fill="#00e1f5"/><rect x="417.56" y="256.85" width="2.800" height="2.800" fill="#00e0f6"/><rect x="420.32" y="256.85" width="2.800" height="2.800" fill="#00dbfb"/><rect x="423.08" y="256.85" width="2.800" height="2.800" fill="#00ceff"/><rect x="425.84" y="256.85" width="2.800" height="2.800" fill="#00b4ff"/><rect x="428.59" y="256.85" width="2.800" height="2.800" fill="#0093ff"/><rect x="431.35" y="256.85" width="2.800" height="2.800" fill="#0059ff"/><rect x="434.11" y="256.85" width="2.800" height="2.800" fill="#0025d0"/><rect x="436.87" y="256.85" width="2.800" height="2.800" fill="#000985"/><rect x="439.62" y="256.85" width="2.800" height="2.800" fill="#00023f"/><rect x="442.38" y="256.85" width="2.800" height="2.800" fill="#000010"/><rect x="392.74" y="259.61" width="2.800" height="2.800" fill="#000014"/><rect x="395.50" y="259.61" width="2.800" height="2.800" fill="#000240"/><rect x="398.26" y="259.61" width="2.800" height="2.800" fill="#00087b"/><rect x="401.02" y="259.61" width="2.800" height="2.800" fill="#0014b8"/><rect x="403.77" y="259.61" width="2.800" height="2.800" fill="#0038eb"/><rect x="406.53" y="259.61" width="2.800" height="2.800" fill="#005cff"/><rect x="409.29" y="259.61" width="2.800" height="2.800" fill="#007cff"/><rect x="412.05" y="259.61" width="2.800" height="2.800" fill="#0092ff"/><rect x="414.80" y="259.61" width="2.800" height="2.800" fill="#009aff"/><rect x="417.56" y="259.61" width="2.800" height="2.800" fill="#0099ff"/><rect x="420.32" y="259.61" width="2.800" height="2.800" fill="#008dff"/><rect x="423.08" y="259.61" width="2.800" height="2.800" fill="#0075ff"/><rect x="425.84" y="259.61" width="2.800" height="2.800" fill="#0052ff"/><rect x="428.59" y="259.61" width="2.800" height="2.800" fill="#002fde"/><rect x="431.35" y="259.61" width="2.800" height="2.800" fill="#000da9"/><rect x="434.11" y="259.61" width="2.800" height="2.800" fill="#000669"/><rect x="436.87" y="259.61" width="2.800" height="2.800" fill="#000132"/><rect x="398.26" y="262.37" width="2.800" height="2.800" fill="#000023"/><rect x="401.02" y="262.37" width="2.800" height="2.800" fill="#00034b"/><rect x="403.77" y="262.37" width="2.800" height="2.800" fill="#000776"/><rect x="406.53" y="262.37" width="2.800" height="2.800" fill="#000c9f"/><rect x="409.29" y="262.37" width="2.800" height="2.800" fill="#0018bd"/><rect x="412.05" y="262.37" width="2.800" height="2.800" fill="#0025d0"/><rect x="414.80" y="262.37" width="2.800" height="2.800" fill="#002cd9"/><rect x="417.56" y="262.37" width="2.800" height="2.800" fill="#002bd8"/><rect x="420.32" y="262.37" width="2.800" height="2.800" fill="#0022cc"/><rect x="423.08" y="262.37" width="2.800" height="2.800" fill="#0013b6"/><rect x="425.84" y="262.37" width="2.800" height="2.800" fill="#000b95"/><rect x="428.59" y="262.37" width="2.800" height="2.800" fill="#00066a"/><rect x="431.35" y="262.37" width="2.800" height="2.800" fill="#000241"/><rect x="434.11" y="262.37" width="2.800" height="2.800" fill="#00001b"/><rect x="403.77" y="265.12" width="2.800" height="2.800" fill="#00001b"/><rect x="406.53" y="265.12" width="2.800" height="2.800" fill="#000132"/><rect x="409.29" y="265.12" width="2.800" height="2.800" fill="#000345"/><rect x="412.05" y="265.12" width="2.800" height="2.800" fill="#000453"/><rect x="414.80" y="265.12" width="2.800" height="2.800" fill="#000459"/><rect x="417.56" y="265.12" width="2.800" height="2.800" fill="#000458"/><rect x="420.32" y="265.12" width="2.800" height="2.800" fill="#000350"/><rect x="423.08" y="265.12" width="2.800" height="2.800" fill="#000241"/><rect x="425.84" y="265.12" width="2.800" height="2.800" fill="#00012b"/><rect x="428.59" y="265.12" width="2.800" height="2.800" fill="#000017"/></g>
<circle cx="413.8" cy="238.5" r="82.4" fill="none" stroke="#23a023" stroke-width="1"/>
<line x1="413.9" y1="36.1" x2="413.9" y2="238" stroke="#d0d0d0" stroke-width="1.5" stroke-dasharray="8.9 8.9"/><line x1="413.9" y1="244.8" x2="413.9" y2="432.5" stroke="#d0d0d0" stroke-width="1.5" stroke-dasharray="8.9 8.9"/>
<line x1="219" y1="238.6" x2="572" y2="238.6" stroke="#dcdcdc" stroke-width="1.5"/>
</svg>
<span class="abs ct" style="left:226px;top:433px;color:#f2f2f2;font-size:9.7px">Image valid</span>
<span class="abs ct" style="left:226px;top:451px;color:#f2f2f2;font-size:9.0px">25.0 FPS</span>
<span class="abs ct" style="left:349px;top:433px;color:#f2f2f2;font-size:9.4px">Frames Good: 260853 Bad:34(</span>
<span class="abs ct" style="left:349px;top:442px;color:#f2f2f2;font-size:9.4px">Baseline: 0.96 %</span>
<span class="abs ct" style="left:349px;top:451px;color:#f2f2f2;font-size:9.7px">Frames averaged: 0</span>
<span class="abs ct" style="left:479px;top:433px;color:#2a6cf0;font-size:9.7px">USB3:SuperSpeed</span>
<span class="abs ct" style="left:479px;top:442px;color:#f2f2f2;font-size:9.4px">Baseline STD:  0.24 %</span>
<span class="abs ct" style="left:479px;top:451px;color:#f2f2f2;font-size:9.5px">ADC Offset: -232 DNs</span>
<!--/CAM-->
<!--MID-->
<div class="abs" style="left:572px;top:44.5px;width:380px;height:328px;background:#b5b5b5"></div>
<div class="abs" style="left:572px;top:372px;width:36.5px;height:61px;background:#b5b5b5"></div>
<svg class="abs" style="left:572px;top:44px" width="380" height="330" viewBox="572 44 380 330"><polygon points="675,161 800,161 800,308 609,308 609,257" fill="#000"/></svg>
<div class="abs" style="left:608.5px;top:372px;width:344.6px;height:23px;background:#fff;border-right:1.5px solid #444;border-bottom:1.3px solid #6c6c6c"></div>
<span class="abs ct" style="left:613px;top:371px;font-size:9.7px;color:#222">Relative Power: 0.00</span>
<span class="abs ct" style="left:733px;top:371px;font-size:9.7px;color:#222">Full Range</span>
<div class="abs" style="left:612.5px;top:381.7px;width:334.5px;height:10.8px;background:#fff;border:1.2px solid #222"></div>
<div class="abs" style="left:608.5px;top:394.3px;width:344px;height:21.4px;background:#bdfcbd"><span class="abs" style="left:5.5px;top:3.1px;font-size:10.85px;font-weight:bold;color:#111;white-space:pre;line-height:13px">(Trigger off) delay = 0.000 ms</span><div class="abs" style="left:4px;top:16.2px;width:335px;height:3.4px;background:#f4f4f4;opacity:.85"></div><div class="abs" style="left:4.5px;top:15.799999999999999px;width:10px;height:4.2px;background:#efefef;border:0.8px solid #8a8a8a;border-top-color:#ddd;border-left-color:#ddd"></div><div class="abs" style="left:14.5px;top:15.799999999999999px;width:11px;height:4.2px;background:#efefef;border:0.8px solid #8a8a8a;border-top-color:#ddd;border-left-color:#ddd"></div><div class="abs" style="left:327.5px;top:15.799999999999999px;width:11px;height:4.2px;background:#efefef;border:0.8px solid #8a8a8a;border-top-color:#ddd;border-left-color:#ddd"></div></div>
<div class="abs" style="left:608.5px;top:415.7px;width:344px;height:21.6px;background:#c4c4fb"><span class="abs" style="left:8.5px;top:2.5px;font-size:10.85px;font-weight:bold;color:#111;white-space:pre;line-height:13px">Imager Gain = 1.0</span><div class="abs" style="left:4px;top:16.400000000000002px;width:335px;height:3.4px;background:#f4f4f4;opacity:.85"></div><div class="abs" style="left:4.5px;top:16.0px;width:10px;height:4.2px;background:#efefef;border:0.8px solid #8a8a8a;border-top-color:#ddd;border-left-color:#ddd"></div><div class="abs" style="left:14.5px;top:16.0px;width:11px;height:4.2px;background:#efefef;border:0.8px solid #8a8a8a;border-top-color:#ddd;border-left-color:#ddd"></div><div class="abs" style="left:327.5px;top:16.0px;width:11px;height:4.2px;background:#efefef;border:0.8px solid #8a8a8a;border-top-color:#ddd;border-left-color:#ddd"></div></div>
<div class="abs" style="left:608.5px;top:437.3px;width:344px;height:21.9px;background:#bdfcbd"><span class="abs" style="left:9.0px;top:3.1px;font-size:10.85px;font-weight:bold;color:#111;white-space:pre;line-height:13px">Exposure time = 10.42 ms</span><div class="abs" style="left:4px;top:16.7px;width:335px;height:3.4px;background:#f4f4f4;opacity:.85"></div><div class="abs" style="left:4.5px;top:16.299999999999997px;width:10px;height:4.2px;background:#efefef;border:0.8px solid #8a8a8a;border-top-color:#ddd;border-left-color:#ddd"></div><div class="abs" style="left:158.5px;top:16.299999999999997px;width:11px;height:4.2px;background:#efefef;border:0.8px solid #8a8a8a;border-top-color:#ddd;border-left-color:#ddd"></div><div class="abs" style="left:327.5px;top:16.299999999999997px;width:11px;height:4.2px;background:#efefef;border:0.8px solid #8a8a8a;border-top-color:#ddd;border-left-color:#ddd"></div></div>
<!--/MID-->
<!--BOTTOM-->
<div class="abs" style="left:0;top:460.5px;width:952.5px;height:181px;background:#fdfdf0"></div>
<div class="abs wrow" style="left:1.5px;top:461px;width:475.5px;height:20.4px"><span class="abs" style="left:23.5px;top:4.3px">2Wua @ 13.5 %</span><span class="abs" style="left:239.5px;top:4.3px">98.8 um</span></div>
<div class="abs wrow" style="left:1.5px;top:481.4px;width:475.5px;height:19.8px;border-bottom:1.3px solid #333"><span class="abs" style="left:23.5px;top:4.3px">2Wub @ 50.0 %</span><span class="abs" style="left:239.5px;top:4.3px">58.9 um</span></div>
<div class="abs wrow" style="left:477px;top:461px;width:474.5px;height:20.4px"><span class="abs" style="left:23px;top:4.3px">2Wva @ 13.5 %</span><span class="abs" style="left:239px;top:4.3px">86.7 um</span></div>
<div class="abs wrow" style="left:477px;top:481.4px;width:474.5px;height:19.8px;border-bottom:1.3px solid #333"><span class="abs" style="left:23px;top:4.3px">2Wvb @ 50.0 %</span><span class="abs" style="left:239px;top:4.3px">52.2 um</span></div>
<svg class="abs" style="left:0;top:500px" width="953" height="142" viewBox="0 500 953 142"><rect x="0" y="500" width="953" height="142" fill="#fdfdf0"/><line x1="2" y1="501.2" x2="951" y2="501.2" stroke="#b6ea70" stroke-width="1"/><line x1="2" y1="513.7" x2="951" y2="513.7" stroke="#b6ea70" stroke-width="1"/><line x1="2" y1="526.2" x2="951" y2="526.2" stroke="#b6ea70" stroke-width="1"/><line x1="2" y1="538.7" x2="951" y2="538.7" stroke="#b6ea70" stroke-width="1"/><line x1="2" y1="551.2" x2="951" y2="551.2" stroke="#b6ea70" stroke-width="1"/><line x1="2" y1="563.7" x2="951" y2="563.7" stroke="#b6ea70" stroke-width="1"/><line x1="2" y1="576.2" x2="951" y2="576.2" stroke="#b6ea70" stroke-width="1"/><line x1="2" y1="588.7" x2="951" y2="588.7" stroke="#b6ea70" stroke-width="1"/><line x1="2" y1="601.2" x2="951" y2="601.2" stroke="#b6ea70" stroke-width="1"/><line x1="2" y1="613.7" x2="951" y2="613.7" stroke="#b6ea70" stroke-width="1"/><line x1="1.7" y1="500.5" x2="1.7" y2="626.5" stroke="#b6ea70" stroke-width="1"/><line x1="49.0" y1="500.5" x2="49.0" y2="626.5" stroke="#b6ea70" stroke-width="1"/><line x1="96.3" y1="500.5" x2="96.3" y2="626.5" stroke="#b6ea70" stroke-width="1"/><line x1="143.7" y1="500.5" x2="143.7" y2="626.5" stroke="#b6ea70" stroke-width="1"/><line x1="191.1" y1="500.5" x2="191.1" y2="626.5" stroke="#b6ea70" stroke-width="1"/><line x1="238.4" y1="500.5" x2="238.4" y2="626.5" stroke="#b6ea70" stroke-width="1"/><line x1="285.8" y1="500.5" x2="285.8" y2="626.5" stroke="#b6ea70" stroke-width="1"/><line x1="333.1" y1="500.5" x2="333.1" y2="626.5" stroke="#b6ea70" stroke-width="1"/><line x1="380.5" y1="500.5" x2="380.5" y2="626.5" stroke="#b6ea70" stroke-width="1"/><line x1="427.8" y1="500.5" x2="427.8" y2="626.5" stroke="#b6ea70" stroke-width="1"/><line x1="475.1" y1="500.5" x2="475.1" y2="626.5" stroke="#b6ea70" stroke-width="1"/><line x1="524.2" y1="500.5" x2="524.2" y2="626.5" stroke="#b6ea70" stroke-width="1"/><line x1="571.5" y1="500.5" x2="571.5" y2="626.5" stroke="#b6ea70" stroke-width="1"/><line x1="618.9" y1="500.5" x2="618.9" y2="626.5" stroke="#b6ea70" stroke-width="1"/><line x1="666.2" y1="500.5" x2="666.2" y2="626.5" stroke="#b6ea70" stroke-width="1"/><line x1="713.6" y1="500.5" x2="713.6" y2="626.5" stroke="#b6ea70" stroke-width="1"/><line x1="761.0" y1="500.5" x2="761.0" y2="626.5" stroke="#b6ea70" stroke-width="1"/><line x1="808.3" y1="500.5" x2="808.3" y2="626.5" stroke="#b6ea70" stroke-width="1"/><line x1="855.7" y1="500.5" x2="855.7" y2="626.5" stroke="#b6ea70" stroke-width="1"/><line x1="903.0" y1="500.5" x2="903.0" y2="626.5" stroke="#b6ea70" stroke-width="1"/><line x1="950.4" y1="500.5" x2="950.4" y2="626.5" stroke="#b6ea70" stroke-width="1"/><line x1="2" y1="501.900" x2="951" y2="501.900" stroke="#8fe83c" stroke-width="1.200"/><line x1="0" y1="500.600" x2="952" y2="500.600" stroke="#3a3a3a" stroke-width="1.300"/><line x1="2" y1="626.4" x2="951" y2="626.4" stroke="#7dfa10" stroke-width="1.6"/><line x1="238.4" y1="500.5" x2="238.4" y2="505" stroke="#4fd000" stroke-width="1.4"/><line x1="238.4" y1="622" x2="238.4" y2="627" stroke="#4fd000" stroke-width="1.4"/><line x1="713.6" y1="500.5" x2="713.6" y2="505" stroke="#4fd000" stroke-width="1.4"/><line x1="713.6" y1="622" x2="713.6" y2="627" stroke="#4fd000" stroke-width="1.4"/><polyline points="72.0,626.2 78.0,626.2 84.0,626.2 90.0,626.2 96.0,626.2 102.0,626.2 108.0,626.2 114.0,626.2 120.0,626.2 126.0,626.2 132.0,626.2 138.0,626.2 144.0,626.2 150.0,626.2 156.0,626.2 162.0,626.2 168.0,626.2 174.0,626.2 180.0,626.2 186.0,626.2 192.0,626.2 198.0,626.2 204.0,626.2 210.0,626.2 216.0,626.2 222.0,626.2 228.0,626.2 234.0,626.2 240.0,626.2 246.0,626.2 252.0,626.2 258.0,626.2 264.0,626.2 270.0,626.2 276.0,626.2 282.0,626.2 288.0,626.2 294.0,626.2 300.0,626.2 306.0,626.2 312.0,626.2 318.0,626.0 318.5,626.0 319.0,625.9 319.5,625.8 320.0,625.6 320.5,625.5 321.0,625.2 321.5,624.9 322.0,624.6 322.5,624.1 323.0,623.6 323.5,622.9 324.0,622.1 324.5,621.1 325.0,620.0 325.5,618.6 326.0,617.0 326.5,615.1 327.0,612.9 327.5,610.4 328.0,607.5 328.5,604.3 329.0,600.7 329.5,596.7 330.0,592.3 330.5,587.6 331.0,582.4 331.5,577.0 332.0,571.2 332.5,565.3 333.0,559.1 333.5,552.8 334.0,546.5 334.5,540.2 335.0,534.1 335.5,528.2 336.0,522.7 336.5,517.6 337.0,513.1 337.5,509.1 338.0,505.9 338.5,503.5 339.0,501.8 339.5,501.1 340.0,501.2 340.5,502.1 341.0,503.9 341.5,506.5 342.0,509.9 342.5,513.9 343.0,518.6 343.5,523.8 344.0,529.4 344.5,535.3 345.0,541.4 345.5,547.7 346.0,554.1 346.5,560.3 347.0,566.5 347.5,572.4 348.0,578.1 348.5,583.5 349.0,588.5 349.5,593.2 350.0,597.5 350.5,601.4 351.0,604.9 351.5,608.1 352.0,610.9 352.5,613.3 353.0,615.5 353.5,617.3 354.0,618.9 354.5,620.2 355.0,621.4 355.5,622.3 356.0,623.1 356.5,623.7 357.0,624.2 357.5,624.7 358.0,625.0 358.5,625.3 359.0,625.5 359.5,625.7 360.0,625.8 360.5,625.9 361.0,626.0 361.5,626.0 362.0,626.1 362.5,626.1 363.0,626.1 363.5,626.2 364.0,626.2 364.5,626.2 365.0,626.2 365.5,626.2 366.0,626.2 372.0,626.2 378.0,626.2 384.0,626.2 390.0,626.2 396.0,626.2 402.0,626.2 406,626.2" fill="none" stroke="#3a3a3a" stroke-width="0.95"/><polyline points="547.0,626.2 553.0,626.2 559.0,626.2 565.0,626.2 571.0,626.2 577.0,626.2 583.0,626.2 589.0,626.2 595.0,626.2 601.0,626.2 607.0,626.2 613.0,626.2 619.0,626.2 625.0,626.2 631.0,626.2 637.0,626.2 643.0,626.2 649.0,626.2 655.0,626.2 661.0,626.2 667.0,626.2 673.0,626.2 679.0,626.2 685.0,626.2 685.5,626.2 686.0,626.1 686.5,626.1 687.0,626.1 687.5,626.0 688.0,626.0 688.5,625.9 689.0,625.8 689.5,625.7 690.0,625.5 690.5,625.2 691.0,624.9 691.5,624.5 692.0,623.9 692.5,623.3 693.0,622.4 693.5,621.4 694.0,620.2 694.5,618.7 695.0,616.8 695.5,614.7 696.0,612.2 696.5,609.3 697.0,605.9 697.5,602.1 698.0,597.8 698.5,593.0 699.0,587.8 699.5,582.1 700.0,576.0 700.5,569.5 701.0,562.8 701.5,555.9 702.0,548.9 702.5,541.9 703.0,535.0 703.5,528.5 704.0,522.3 704.5,516.7 705.0,511.9 705.5,507.8 706.0,504.6 706.5,502.4 707.0,501.2 707.5,501.1 708.0,502.0 708.5,504.1 709.0,507.1 709.5,511.0 710.0,515.7 710.5,521.2 711.0,527.2 711.5,533.7 712.0,540.5 712.5,547.5 713.0,554.5 713.5,561.4 714.0,568.2 714.5,574.7 715.0,580.9 715.5,586.7 716.0,592.0 716.5,596.9 717.0,601.3 717.5,605.2 718.0,608.6 718.5,611.6 719.0,614.2 719.5,616.4 720.0,618.3 720.5,619.9 721.0,621.2 721.5,622.3 722.0,623.1 722.5,623.8 723.0,624.4 723.5,624.8 724.0,625.2 724.5,625.4 725.0,625.6 725.5,625.8 726.0,625.9 726.5,626.0 727.0,626.0 727.5,626.1 728.0,626.1 728.5,626.1 729.0,626.2 729.5,626.2 730.0,626.2 730.5,626.2 731.0,626.2 731.5,626.2 732.0,626.2 732.5,626.2 733.0,626.2 733.5,626.2 739.5,626.2 745.5,626.2 751.5,626.2 757.5,626.2 763.5,626.2 769.5,626.2 775.5,626.2 781.5,626.2 787.5,626.2 793.5,626.2 799.5,626.2 805.5,626.2 811.5,626.2 817.5,626.2 823.5,626.2 829.5,626.2 835.5,626.2 841.5,626.2 847.5,626.2 853.5,626.2 859.5,626.2 865.5,626.2 871.5,626.2 877.5,626.2 883.5,626.2 889.5,626.2 895.5,626.2 901.5,626.2 907.5,626.2 913.5,626.2 919.5,626.2 925.5,626.2 931.5,626.2 937.5,626.2 943.5,626.2 949.5,626.2 951,626.2" fill="none" stroke="#3a3a3a" stroke-width="0.95"/><line x1="476.4" y1="500" x2="476.4" y2="641" stroke="#111" stroke-width="1.3"/><line x1="1.2" y1="500" x2="1.2" y2="641" stroke="#444" stroke-width="1.2"/><line x1="951.5" y1="500" x2="951.5" y2="641" stroke="#333" stroke-width="1.4"/><rect x="2" y="630.5" width="949" height="10" fill="#fff"/><line x1="0" y1="630.8" x2="952" y2="630.8" stroke="#b0b0b0" stroke-width="1.2"/><line x1="0" y1="640.6" x2="952" y2="640.6" stroke="#9a9a9a" stroke-width="1.2"/><line x1="239.5" y1="631" x2="239.5" y2="641" stroke="#555" stroke-width="1"/><line x1="715" y1="631" x2="715" y2="641" stroke="#555" stroke-width="1"/></svg>
<span class="abs ct" style="left:3.5px;top:631px;font-size:9.2px;color:#222">Scale = 200.0 um/div</span>
<span class="abs ct" style="left:241px;top:631px;font-size:8.9px;color:#222">Peak = 75.2 %,  B = 1.0 %</span>
<span class="abs ct" style="left:479px;top:631px;font-size:9.2px;color:#222">Scale = 200.0 um/div</span>
<span class="abs ct" style="left:716.5px;top:631px;font-size:8.9px;color:#222">Peak = 73.9 %,  B = 1.0 %</span>
<div class="abs" style="left:0;top:641.3px;width:952.500px;height:13.5px;background:#f0f0f0"></div>
<span class="abs ct" style="left:1.5px;top:642.3px;font-size:8.9px;color:#333">Image area</span>
<div class="abs" style="left:475.750px;top:460.500px;width:1.300px;height:41px;background:#111"></div><div class="abs" style="left:950.800px;top:460.500px;width:1.400px;height:41px;background:#333"></div>
<!--/BOTTOM-->
<!--WANDER-->
<div class="abs" id="wander" style="left:772.5px;top:0.5px;width:198.8px;height:380.5px;background:#f0f0f0;border:1px solid #d6d6d6;box-shadow:0 0 3px rgba(0,0,0,.22)"></div>
<div class="abs" style="left:773.5px;top:1.5px;width:196.8px;height:20px;background:#fff"></div>
<svg class="abs" style="left:778px;top:6px" width="11" height="9" viewBox="0 0 11 9"><rect x="0.3" y="0.3" width="10.4" height="8.4" fill="#e8eef0" stroke="#8a9a9a" stroke-width="0.6"/><rect x="1.6" y="1.2" width="4.6" height="6.2" fill="#2f7f7a"/><rect x="7.4" y="1.4" width="2.2" height="2.4" fill="#9aa"/></svg>
<span class="abs ct" style="left:792px;top:6.1px;font-size:8.9px;color:#8a8a8a">Beam Wander</span>
<svg class="abs" style="left:880px;top:2px" width="90" height="18" viewBox="880 2 90 18"><line x1="885" y1="10.5" x2="892" y2="10.5" stroke="#777" stroke-width="0.9"/><rect x="917.5" y="7.5" width="6.5" height="6.5" fill="none" stroke="#e2e2e2" stroke-width="0.9" rx="1"/><path d="M950.8 7.2l6.6 6.6M957.4 7.2l-6.6 6.6" stroke="#777" stroke-width="0.9" fill="none"/></svg>
<svg class="abs" style="left:779px;top:28px" width="182" height="166" viewBox="779 28 182 166"><rect x="779.7" y="29.2" width="180" height="164" fill="#00ff00"/><ellipse cx="869.8" cy="111.2" rx="89.6" ry="81.6" fill="none" stroke="#0a6a0a" stroke-width="0.75"/><line x1="780" y1="111.7" x2="959.6" y2="111.7" stroke="#0a4a0a" stroke-width="0.8"/><line x1="870.1" y1="29.5" x2="870.1" y2="193" stroke="#0a5a0a" stroke-width="0.7"/><path d="M789.1 109.6v3.400M868.300 37.9h3.600M798.1 109.6v3.400M868.300 46.1h3.600M807.1 109.6v3.400M868.300 54.3h3.600M816.1 109.6v3.400M868.300 62.5h3.600M825.1 109.6v3.400M868.300 70.7h3.600M834.1 109.6v3.400M868.300 78.9h3.600M843.1 109.6v3.400M868.300 87.1h3.600M852.1 109.6v3.400M868.300 95.3h3.600M861.1 109.6v3.400M868.300 103.5h3.600M879.1 109.6v3.400M868.300 119.9h3.600M888.1 109.6v3.400M868.300 128.1h3.600M897.1 109.6v3.400M868.300 136.3h3.600M906.1 109.6v3.400M868.300 144.5h3.600M915.1 109.6v3.400M868.300 152.7h3.600M924.1 109.6v3.400M868.300 160.9h3.600M933.1 109.6v3.400M868.300 169.1h3.600M942.1 109.6v3.400M868.300 177.3h3.600M951.1 109.6v3.400M868.300 185.5h3.600" stroke="#0a4a0a" stroke-width="0.8" fill="none"/><g transform="translate(0 1.7)"><circle cx="871.1" cy="113.6" r="1.3" fill="#1a0808"/><circle cx="871.4" cy="117.5" r="1.3" fill="#1a0808"/><circle cx="870.3" cy="118.4" r="1.3" fill="#1a0808"/><circle cx="870.1" cy="119.0" r="1.3" fill="#1a0808"/><circle cx="865.9" cy="119.6" r="1.3" fill="#1a0808"/><circle cx="876.2" cy="117.3" r="1.3" fill="#1a0808"/><circle cx="883.6" cy="114.2" r="1.3" fill="#1a0808"/><circle cx="877.2" cy="111.3" r="1.3" fill="#1a0808"/><circle cx="853.6" cy="112.2" r="1.3" fill="#1a0808"/><circle cx="866.9" cy="118.5" r="1.3" fill="#1a0808"/><circle cx="884.4" cy="117.3" r="1.3" fill="#1a0808"/><circle cx="882.4" cy="112.8" r="1.3" fill="#1a0808"/><circle cx="880.0" cy="116.2" r="1.3" fill="#1a0808"/><circle cx="871.9" cy="120.7" r="1.3" fill="#1a0808"/><circle cx="873.0" cy="121.8" r="1.3" fill="#1a0808"/><circle cx="867.1" cy="116.4" r="1.3" fill="#1a0808"/><circle cx="870.5" cy="118.3" r="1.3" fill="#1a0808"/><circle cx="875.7" cy="115.7" r="1.3" fill="#1a0808"/><circle cx="851.7" cy="111.7" r="1.3" fill="#1a0808"/><circle cx="863.7" cy="118.1" r="1.3" fill="#1a0808"/><circle cx="876.9" cy="118.8" r="1.3" fill="#1a0808"/><circle cx="884.8" cy="113.8" r="1.3" fill="#1a0808"/><circle cx="866.0" cy="113.7" r="1.3" fill="#1a0808"/><circle cx="875.8" cy="122.7" r="1.3" fill="#1a0808"/><circle cx="858.7" cy="112.2" r="1.3" fill="#1a0808"/><circle cx="879.5" cy="116.5" r="1.3" fill="#1a0808"/><circle cx="868.6" cy="110.6" r="1.3" fill="#1a0808"/><circle cx="874.6" cy="121.1" r="1.3" fill="#1a0808"/><circle cx="877.8" cy="112.0" r="1.3" fill="#1a0808"/><circle cx="875.2" cy="114.8" r="1.3" fill="#1a0808"/><circle cx="877.4" cy="112.1" r="1.3" fill="#1a0808"/><circle cx="856.7" cy="122.1" r="1.3" fill="#1a0808"/><circle cx="881.4" cy="114.3" r="1.3" fill="#1a0808"/><circle cx="883.6" cy="113.1" r="1.3" fill="#1a0808"/><circle cx="859.7" cy="117.5" r="1.3" fill="#1a0808"/><circle cx="873.0" cy="123.3" r="1.3" fill="#1a0808"/><circle cx="879.8" cy="116.0" r="1.3" fill="#1a0808"/><circle cx="866.4" cy="117.7" r="1.3" fill="#1a0808"/><circle cx="879.4" cy="113.5" r="1.3" fill="#1a0808"/><circle cx="878.8" cy="118.6" r="1.3" fill="#1a0808"/><circle cx="857.7" cy="112.0" r="1.3" fill="#1a0808"/><circle cx="862.3" cy="113.2" r="1.3" fill="#1a0808"/><circle cx="875.3" cy="113.5" r="1.3" fill="#1a0808"/><circle cx="863.9" cy="122.5" r="1.3" fill="#1a0808"/><circle cx="883.9" cy="114.6" r="1.3" fill="#1a0808"/><circle cx="878.2" cy="117.5" r="1.3" fill="#1a0808"/><circle cx="862.9" cy="116.1" r="1.3" fill="#1a0808"/><circle cx="884.4" cy="113.8" r="1.3" fill="#1a0808"/><circle cx="879.5" cy="112.9" r="1.3" fill="#1a0808"/><circle cx="867.4" cy="118.5" r="1.3" fill="#1a0808"/><circle cx="871.7" cy="112.5" r="1.3" fill="#1a0808"/><circle cx="871.2" cy="122.2" r="1.3" fill="#1a0808"/><circle cx="867.6" cy="121.0" r="1.3" fill="#1a0808"/><circle cx="879.3" cy="114.5" r="1.3" fill="#1a0808"/><circle cx="858.3" cy="113.9" r="1.3" fill="#1a0808"/><circle cx="867.1" cy="112.3" r="1.35" fill="#8a0808" stroke="#3a0505" stroke-width="0.5"/><circle cx="879.5" cy="113.2" r="1.35" fill="#c81010" stroke="#3a0505" stroke-width="0.5"/><circle cx="883.9" cy="105.7" r="1.35" fill="#d81010" stroke="#3a0505" stroke-width="0.5"/><circle cx="867.5" cy="113.8" r="1.35" fill="#b80c0c" stroke="#3a0505" stroke-width="0.5"/><circle cx="875.2" cy="110.0" r="1.35" fill="#b80c0c" stroke="#3a0505" stroke-width="0.5"/><circle cx="879.7" cy="100.7" r="1.35" fill="#c81010" stroke="#3a0505" stroke-width="0.5"/><circle cx="876.8" cy="108.7" r="1.35" fill="#d01414" stroke="#3a0505" stroke-width="0.5"/><circle cx="874.3" cy="111.9" r="1.35" fill="#c81010" stroke="#3a0505" stroke-width="0.5"/><circle cx="870.6" cy="101.1" r="1.35" fill="#8a0808" stroke="#3a0505" stroke-width="0.5"/><circle cx="867.0" cy="112.3" r="1.35" fill="#e01818" stroke="#3a0505" stroke-width="0.5"/><circle cx="872.7" cy="109.5" r="1.35" fill="#c81010" stroke="#3a0505" stroke-width="0.5"/><circle cx="868.9" cy="108.0" r="1.35" fill="#e01818" stroke="#3a0505" stroke-width="0.5"/><circle cx="871.7" cy="108.4" r="1.35" fill="#e01818" stroke="#3a0505" stroke-width="0.5"/><circle cx="877.8" cy="111.6" r="1.35" fill="#c81010" stroke="#3a0505" stroke-width="0.5"/><circle cx="872.7" cy="116.2" r="1.35" fill="#d01414" stroke="#3a0505" stroke-width="0.5"/><circle cx="870.0" cy="98.5" r="1.35" fill="#8a0808" stroke="#3a0505" stroke-width="0.5"/><circle cx="869.1" cy="110.4" r="1.35" fill="#b80c0c" stroke="#3a0505" stroke-width="0.5"/><circle cx="871.2" cy="105.9" r="1.35" fill="#d81010" stroke="#3a0505" stroke-width="0.5"/><circle cx="857.3" cy="108.0" r="1.35" fill="#d81010" stroke="#3a0505" stroke-width="0.5"/><circle cx="869.7" cy="109.0" r="1.35" fill="#d81010" stroke="#3a0505" stroke-width="0.5"/><circle cx="866.1" cy="114.6" r="1.35" fill="#d01414" stroke="#3a0505" stroke-width="0.5"/><circle cx="874.2" cy="119.9" r="1.35" fill="#d01414" stroke="#3a0505" stroke-width="0.5"/><circle cx="874.6" cy="107.2" r="1.35" fill="#b80c0c" stroke="#3a0505" stroke-width="0.5"/><circle cx="861.5" cy="105.3" r="1.35" fill="#d81010" stroke="#3a0505" stroke-width="0.5"/><circle cx="877.8" cy="112.8" r="1.35" fill="#d81010" stroke="#3a0505" stroke-width="0.5"/><circle cx="866.8" cy="113.4" r="1.35" fill="#8a0808" stroke="#3a0505" stroke-width="0.5"/><circle cx="865.5" cy="107.1" r="1.35" fill="#d81010" stroke="#3a0505" stroke-width="0.5"/><circle cx="866.3" cy="108.0" r="1.35" fill="#d01414" stroke="#3a0505" stroke-width="0.5"/><circle cx="869.6" cy="112.2" r="1.35" fill="#c81010" stroke="#3a0505" stroke-width="0.5"/><circle cx="873.9" cy="108.9" r="1.35" fill="#d01414" stroke="#3a0505" stroke-width="0.5"/><circle cx="865.5" cy="107.8" r="1.35" fill="#c81010" stroke="#3a0505" stroke-width="0.5"/><circle cx="865.2" cy="110.5" r="1.35" fill="#8a0808" stroke="#3a0505" stroke-width="0.5"/><circle cx="869.0" cy="115.6" r="1.35" fill="#c81010" stroke="#3a0505" stroke-width="0.5"/><circle cx="872.4" cy="120.9" r="1.35" fill="#d81010" stroke="#3a0505" stroke-width="0.5"/><circle cx="873.0" cy="103.1" r="1.35" fill="#c81010" stroke="#3a0505" stroke-width="0.5"/><circle cx="871.1" cy="109.5" r="1.35" fill="#b80c0c" stroke="#3a0505" stroke-width="0.5"/><circle cx="871.8" cy="113.4" r="1.35" fill="#8a0808" stroke="#3a0505" stroke-width="0.5"/><circle cx="877.0" cy="114.3" r="1.35" fill="#d01414" stroke="#3a0505" stroke-width="0.5"/><circle cx="881.7" cy="114.4" r="1.35" fill="#e01818" stroke="#3a0505" stroke-width="0.5"/><circle cx="868.2" cy="106.3" r="1.35" fill="#e01818" stroke="#3a0505" stroke-width="0.5"/><circle cx="878.3" cy="104.0" r="1.35" fill="#e01818" stroke="#3a0505" stroke-width="0.5"/><circle cx="863.5" cy="112.8" r="1.35" fill="#8a0808" stroke="#3a0505" stroke-width="0.5"/><circle cx="867.2" cy="112.3" r="1.35" fill="#e01818" stroke="#3a0505" stroke-width="0.5"/><circle cx="869.2" cy="100.7" r="1.35" fill="#d81010" stroke="#3a0505" stroke-width="0.5"/><circle cx="871.2" cy="106.8" r="1.35" fill="#b80c0c" stroke="#3a0505" stroke-width="0.5"/><circle cx="857.7" cy="110.5" r="1.35" fill="#c81010" stroke="#3a0505" stroke-width="0.5"/><circle cx="868.5" cy="109.0" r="1.35" fill="#c81010" stroke="#3a0505" stroke-width="0.5"/><circle cx="874.8" cy="105.4" r="1.35" fill="#d01414" stroke="#3a0505" stroke-width="0.5"/><circle cx="875.6" cy="106.0" r="1.35" fill="#8a0808" stroke="#3a0505" stroke-width="0.5"/><circle cx="880.8" cy="107.8" r="1.35" fill="#d81010" stroke="#3a0505" stroke-width="0.5"/><circle cx="871.6" cy="108.4" r="1.35" fill="#d01414" stroke="#3a0505" stroke-width="0.5"/><circle cx="878.5" cy="108.0" r="1.35" fill="#b80c0c" stroke="#3a0505" stroke-width="0.5"/><circle cx="864.0" cy="106.0" r="1.35" fill="#d01414" stroke="#3a0505" stroke-width="0.5"/><circle cx="865.2" cy="112.8" r="1.35" fill="#d81010" stroke="#3a0505" stroke-width="0.5"/><circle cx="875.6" cy="109.9" r="1.35" fill="#e01818" stroke="#3a0505" stroke-width="0.5"/><circle cx="866.6" cy="113.3" r="1.35" fill="#d81010" stroke="#3a0505" stroke-width="0.5"/><circle cx="855.6" cy="103.4" r="1.35" fill="#d01414" stroke="#3a0505" stroke-width="0.5"/><circle cx="873.6" cy="106.7" r="1.35" fill="#d81010" stroke="#3a0505" stroke-width="0.5"/><circle cx="866.9" cy="108.3" r="1.35" fill="#c81010" stroke="#3a0505" stroke-width="0.5"/><circle cx="867.6" cy="109.2" r="1.35" fill="#c81010" stroke="#3a0505" stroke-width="0.5"/><circle cx="879.9" cy="108.3" r="1.35" fill="#e01818" stroke="#3a0505" stroke-width="0.5"/><circle cx="870.7" cy="108.9" r="1.35" fill="#d01414" stroke="#3a0505" stroke-width="0.5"/><circle cx="876.1" cy="114.6" r="1.35" fill="#e01818" stroke="#3a0505" stroke-width="0.5"/><circle cx="868.8" cy="103.1" r="1.35" fill="#e01818" stroke="#3a0505" stroke-width="0.5"/><circle cx="877.2" cy="118.6" r="1.35" fill="#d01414" stroke="#3a0505" stroke-width="0.5"/><circle cx="877.8" cy="105.7" r="1.35" fill="#e01818" stroke="#3a0505" stroke-width="0.5"/><circle cx="875.0" cy="102.4" r="1.35" fill="#c81010" stroke="#3a0505" stroke-width="0.5"/><circle cx="862.3" cy="103.1" r="1.35" fill="#8a0808" stroke="#3a0505" stroke-width="0.5"/><circle cx="868.5" cy="112.7" r="1.35" fill="#c81010" stroke="#3a0505" stroke-width="0.5"/><circle cx="858.1" cy="103.5" r="1.35" fill="#d81010" stroke="#3a0505" stroke-width="0.5"/><circle cx="885.1" cy="108.0" r="1.35" fill="#d01414" stroke="#3a0505" stroke-width="0.5"/><circle cx="860.8" cy="111.6" r="1.35" fill="#e01818" stroke="#3a0505" stroke-width="0.5"/><circle cx="869.7" cy="119.9" r="1.35" fill="#b80c0c" stroke="#3a0505" stroke-width="0.5"/><circle cx="861.8" cy="101.6" r="1.35" fill="#b80c0c" stroke="#3a0505" stroke-width="0.5"/><circle cx="868.7" cy="109.0" r="1.35" fill="#d81010" stroke="#3a0505" stroke-width="0.5"/><circle cx="879.9" cy="108.4" r="1.35" fill="#c81010" stroke="#3a0505" stroke-width="0.5"/><circle cx="872.9" cy="106.9" r="1.35" fill="#b80c0c" stroke="#3a0505" stroke-width="0.5"/><circle cx="875.9" cy="108.4" r="1.35" fill="#d81010" stroke="#3a0505" stroke-width="0.5"/><circle cx="871.1" cy="108.4" r="1.35" fill="#8a0808" stroke="#3a0505" stroke-width="0.5"/><circle cx="871.6" cy="105.4" r="1.35" fill="#e01818" stroke="#3a0505" stroke-width="0.5"/><circle cx="875.3" cy="114.0" r="1.35" fill="#d01414" stroke="#3a0505" stroke-width="0.5"/><circle cx="867.0" cy="105.4" r="1.35" fill="#c81010" stroke="#3a0505" stroke-width="0.5"/><circle cx="858.4" cy="103.3" r="1.35" fill="#e01818" stroke="#3a0505" stroke-width="0.5"/><circle cx="866.9" cy="104.0" r="1.35" fill="#d01414" stroke="#3a0505" stroke-width="0.5"/><circle cx="873.7" cy="106.9" r="1.35" fill="#8a0808" stroke="#3a0505" stroke-width="0.5"/><circle cx="869.7" cy="112.8" r="1.35" fill="#b80c0c" stroke="#3a0505" stroke-width="0.5"/><circle cx="865.0" cy="104.1" r="1.35" fill="#8a0808" stroke="#3a0505" stroke-width="0.5"/><circle cx="858.7" cy="111.8" r="1.35" fill="#8a0808" stroke="#3a0505" stroke-width="0.5"/><circle cx="881.5" cy="103.6" r="1.35" fill="#e01818" stroke="#3a0505" stroke-width="0.5"/><circle cx="869.9" cy="107.6" r="1.35" fill="#d81010" stroke="#3a0505" stroke-width="0.5"/><circle cx="872.5" cy="108.6" r="1.35" fill="#d81010" stroke="#3a0505" stroke-width="0.5"/><circle cx="870.2" cy="104.9" r="1.35" fill="#8a0808" stroke="#3a0505" stroke-width="0.5"/><circle cx="870.4" cy="111.0" r="1.35" fill="#e01818" stroke="#3a0505" stroke-width="0.5"/><circle cx="872.7" cy="114.7" r="1.35" fill="#c81010" stroke="#3a0505" stroke-width="0.5"/><circle cx="873.8" cy="116.8" r="1.35" fill="#c81010" stroke="#3a0505" stroke-width="0.5"/><circle cx="866.2" cy="108.9" r="1.35" fill="#e01818" stroke="#3a0505" stroke-width="0.5"/><circle cx="877.3" cy="104.2" r="1.35" fill="#c81010" stroke="#3a0505" stroke-width="0.5"/><circle cx="881.2" cy="107.3" r="1.35" fill="#c81010" stroke="#3a0505" stroke-width="0.5"/><circle cx="870.6" cy="101.8" r="1.35" fill="#e01818" stroke="#3a0505" stroke-width="0.5"/><circle cx="862.4" cy="105.7" r="1.35" fill="#d81010" stroke="#3a0505" stroke-width="0.5"/><circle cx="856.3" cy="110.6" r="1.35" fill="#d01414" stroke="#3a0505" stroke-width="0.5"/><circle cx="874.8" cy="107.9" r="1.35" fill="#e01818" stroke="#3a0505" stroke-width="0.5"/><circle cx="879.8" cy="107.9" r="1.35" fill="#d01414" stroke="#3a0505" stroke-width="0.5"/><circle cx="869.2" cy="101.7" r="1.35" fill="#8a0808" stroke="#3a0505" stroke-width="0.5"/><circle cx="865.6" cy="109.5" r="1.35" fill="#8a0808" stroke="#3a0505" stroke-width="0.5"/><circle cx="874.7" cy="110.2" r="1.35" fill="#d01414" stroke="#3a0505" stroke-width="0.5"/><circle cx="870.2" cy="104.7" r="1.35" fill="#e01818" stroke="#3a0505" stroke-width="0.5"/><circle cx="874.6" cy="100.6" r="1.35" fill="#8a0808" stroke="#3a0505" stroke-width="0.5"/><circle cx="868.3" cy="105.9" r="1.35" fill="#8a0808" stroke="#3a0505" stroke-width="0.5"/><circle cx="865.7" cy="102.6" r="1.35" fill="#e01818" stroke="#3a0505" stroke-width="0.5"/><circle cx="863.9" cy="115.1" r="1.35" fill="#b80c0c" stroke="#3a0505" stroke-width="0.5"/><circle cx="867.0" cy="112.8" r="1.35" fill="#b80c0c" stroke="#3a0505" stroke-width="0.5"/><circle cx="868.2" cy="111.8" r="1.35" fill="#e01818" stroke="#3a0505" stroke-width="0.5"/><circle cx="868.7" cy="111.4" r="1.35" fill="#e01818" stroke="#3a0505" stroke-width="0.5"/><circle cx="869.1" cy="110.8" r="1.35" fill="#c81010" stroke="#3a0505" stroke-width="0.5"/><circle cx="872.8" cy="116.6" r="1.35" fill="#c81010" stroke="#3a0505" stroke-width="0.5"/><circle cx="877.1" cy="102.6" r="1.35" fill="#e01818" stroke="#3a0505" stroke-width="0.5"/><circle cx="868.7" cy="103.8" r="1.35" fill="#d81010" stroke="#3a0505" stroke-width="0.5"/><circle cx="875.9" cy="114.4" r="1.35" fill="#b80c0c" stroke="#3a0505" stroke-width="0.5"/><circle cx="875.1" cy="119.8" r="1.35" fill="#d81010" stroke="#3a0505" stroke-width="0.5"/><circle cx="863.2" cy="107.7" r="1.35" fill="#b80c0c" stroke="#3a0505" stroke-width="0.5"/><circle cx="863.4" cy="102.5" r="1.35" fill="#e01818" stroke="#3a0505" stroke-width="0.5"/><circle cx="870.9" cy="111.2" r="1.35" fill="#d81010" stroke="#3a0505" stroke-width="0.5"/><circle cx="864.9" cy="115.2" r="1.35" fill="#8a0808" stroke="#3a0505" stroke-width="0.5"/><circle cx="872.7" cy="113.9" r="1.35" fill="#e01818" stroke="#3a0505" stroke-width="0.5"/><circle cx="867.4" cy="110.7" r="1.35" fill="#e01818" stroke="#3a0505" stroke-width="0.5"/><circle cx="874.5" cy="120.0" r="1.35" fill="#d81010" stroke="#3a0505" stroke-width="0.5"/><circle cx="870.2" cy="107.3" r="1.35" fill="#d01414" stroke="#3a0505" stroke-width="0.5"/><circle cx="869.6" cy="101.9" r="1.35" fill="#b80c0c" stroke="#3a0505" stroke-width="0.5"/><circle cx="873.2" cy="105.7" r="1.35" fill="#b80c0c" stroke="#3a0505" stroke-width="0.5"/><circle cx="874.7" cy="103.9" r="1.35" fill="#d81010" stroke="#3a0505" stroke-width="0.5"/><circle cx="874.2" cy="108.6" r="1.35" fill="#e01818" stroke="#3a0505" stroke-width="0.5"/><circle cx="869.8" cy="111.6" r="1.35" fill="#d01414" stroke="#3a0505" stroke-width="0.5"/><circle cx="876.6" cy="102.4" r="1.35" fill="#8a0808" stroke="#3a0505" stroke-width="0.5"/><circle cx="880.2" cy="112.3" r="1.35" fill="#d81010" stroke="#3a0505" stroke-width="0.5"/><circle cx="876.8" cy="108.6" r="1.35" fill="#d01414" stroke="#3a0505" stroke-width="0.5"/><circle cx="873.1" cy="116.6" r="1.35" fill="#c81010" stroke="#3a0505" stroke-width="0.5"/><circle cx="862.4" cy="106.8" r="1.35" fill="#8a0808" stroke="#3a0505" stroke-width="0.5"/><circle cx="869.5" cy="117.8" r="1.35" fill="#b80c0c" stroke="#3a0505" stroke-width="0.5"/><circle cx="869.9" cy="109.1" r="1.35" fill="#d01414" stroke="#3a0505" stroke-width="0.5"/><circle cx="873.7" cy="111.0" r="1.35" fill="#c81010" stroke="#3a0505" stroke-width="0.5"/><circle cx="860.9" cy="112.3" r="1.35" fill="#8a0808" stroke="#3a0505" stroke-width="0.5"/><circle cx="874.7" cy="106.8" r="1.35" fill="#e01818" stroke="#3a0505" stroke-width="0.5"/><circle cx="862.0" cy="103.4" r="1.35" fill="#d81010" stroke="#3a0505" stroke-width="0.5"/><circle cx="876.0" cy="110.6" r="1.35" fill="#d81010" stroke="#3a0505" stroke-width="0.5"/><circle cx="866.5" cy="113.8" r="1.35" fill="#d01414" stroke="#3a0505" stroke-width="0.5"/><circle cx="871.3" cy="110.7" r="1.35" fill="#b80c0c" stroke="#3a0505" stroke-width="0.5"/><circle cx="870.0" cy="115.9" r="1.35" fill="#b80c0c" stroke="#3a0505" stroke-width="0.5"/><circle cx="868.2" cy="110.5" r="1.35" fill="#e01818" stroke="#3a0505" stroke-width="0.5"/><circle cx="876.6" cy="105.0" r="1.35" fill="#c81010" stroke="#3a0505" stroke-width="0.5"/><circle cx="869.9" cy="105.0" r="1.35" fill="#c81010" stroke="#3a0505" stroke-width="0.5"/><circle cx="864.2" cy="110.5" r="1.35" fill="#8a0808" stroke="#3a0505" stroke-width="0.5"/><circle cx="870.8" cy="112.1" r="1.35" fill="#c81010" stroke="#3a0505" stroke-width="0.5"/><circle cx="873.6" cy="108.3" r="1.35" fill="#e01818" stroke="#3a0505" stroke-width="0.5"/><circle cx="872.0" cy="109.1" r="1.35" fill="#b80c0c" stroke="#3a0505" stroke-width="0.5"/><circle cx="870.3" cy="109.4" r="1.35" fill="#8a0808" stroke="#3a0505" stroke-width="0.5"/><circle cx="883.2" cy="104.9" r="1.35" fill="#8a0808" stroke="#3a0505" stroke-width="0.5"/><circle cx="869.5" cy="95.8" r="1.35" fill="#d01414" stroke="#3a0505" stroke-width="0.5"/><circle cx="863.4" cy="103.3" r="1.35" fill="#8a0808" stroke="#3a0505" stroke-width="0.5"/><circle cx="873.8" cy="103.1" r="1.35" fill="#d81010" stroke="#3a0505" stroke-width="0.5"/><circle cx="865.6" cy="101.3" r="1.35" fill="#c81010" stroke="#3a0505" stroke-width="0.5"/><circle cx="879.7" cy="106.7" r="1.35" fill="#c81010" stroke="#3a0505" stroke-width="0.5"/><circle cx="871.6" cy="103.5" r="1.35" fill="#c81010" stroke="#3a0505" stroke-width="0.5"/><circle cx="869.0" cy="114.0" r="1.35" fill="#8a0808" stroke="#3a0505" stroke-width="0.5"/><circle cx="869.0" cy="106.3" r="1.35" fill="#8a0808" stroke="#3a0505" stroke-width="0.5"/><circle cx="873.9" cy="108.0" r="1.35" fill="#8a0808" stroke="#3a0505" stroke-width="0.5"/><circle cx="879.0" cy="115.6" r="1.35" fill="#d01414" stroke="#3a0505" stroke-width="0.5"/><circle cx="867.5" cy="109.3" r="1.35" fill="#e01818" stroke="#3a0505" stroke-width="0.5"/><circle cx="871.9" cy="103.9" r="1.35" fill="#c81010" stroke="#3a0505" stroke-width="0.5"/><circle cx="866.9" cy="109.6" r="1.35" fill="#b80c0c" stroke="#3a0505" stroke-width="0.5"/><circle cx="865.4" cy="109.5" r="1.35" fill="#d01414" stroke="#3a0505" stroke-width="0.5"/><circle cx="869.2" cy="111.2" r="1.35" fill="#e01818" stroke="#3a0505" stroke-width="0.5"/><circle cx="870.3" cy="104.8" r="1.35" fill="#e01818" stroke="#3a0505" stroke-width="0.5"/><circle cx="873.7" cy="111.5" r="1.35" fill="#d01414" stroke="#3a0505" stroke-width="0.5"/><circle cx="871.7" cy="111.7" r="1.35" fill="#e01818" stroke="#3a0505" stroke-width="0.5"/><circle cx="869.3" cy="107.7" r="1.35" fill="#8a0808" stroke="#3a0505" stroke-width="0.5"/><circle cx="869.3" cy="107.5" r="1.35" fill="#d81010" stroke="#3a0505" stroke-width="0.5"/><circle cx="872.4" cy="107.8" r="1.35" fill="#b80c0c" stroke="#3a0505" stroke-width="0.5"/><circle cx="873.5" cy="103.1" r="1.35" fill="#c81010" stroke="#3a0505" stroke-width="0.5"/><circle cx="873.9" cy="104.2" r="1.35" fill="#d01414" stroke="#3a0505" stroke-width="0.5"/><circle cx="866.3" cy="102.5" r="1.35" fill="#8a0808" stroke="#3a0505" stroke-width="0.5"/><circle cx="875.7" cy="110.5" r="1.35" fill="#b80c0c" stroke="#3a0505" stroke-width="0.5"/><circle cx="868.2" cy="109.2" r="1.35" fill="#d81010" stroke="#3a0505" stroke-width="0.5"/><circle cx="866.9" cy="105.5" r="1.35" fill="#8a0808" stroke="#3a0505" stroke-width="0.5"/><circle cx="870.9" cy="106.4" r="1.35" fill="#b80c0c" stroke="#3a0505" stroke-width="0.5"/><circle cx="867.3" cy="103.8" r="1.35" fill="#d01414" stroke="#3a0505" stroke-width="0.5"/><circle cx="865.3" cy="104.0" r="1.35" fill="#e01818" stroke="#3a0505" stroke-width="0.5"/><circle cx="866.7" cy="110.8" r="1.35" fill="#d01414" stroke="#3a0505" stroke-width="0.5"/><circle cx="874.9" cy="117.7" r="1.35" fill="#d81010" stroke="#3a0505" stroke-width="0.5"/><circle cx="865.2" cy="109.1" r="1.35" fill="#b80c0c" stroke="#3a0505" stroke-width="0.5"/><circle cx="870.4" cy="103.8" r="1.35" fill="#d81010" stroke="#3a0505" stroke-width="0.5"/><circle cx="874.5" cy="110.1" r="1.35" fill="#d81010" stroke="#3a0505" stroke-width="0.5"/><circle cx="875.5" cy="111.8" r="1.35" fill="#e01818" stroke="#3a0505" stroke-width="0.5"/><circle cx="869.3" cy="106.5" r="1.35" fill="#c81010" stroke="#3a0505" stroke-width="0.5"/><circle cx="867.0" cy="107.0" r="1.35" fill="#c81010" stroke="#3a0505" stroke-width="0.5"/><circle cx="875.0" cy="109.2" r="1.35" fill="#d81010" stroke="#3a0505" stroke-width="0.5"/><circle cx="860.3" cy="111.1" r="1.35" fill="#8a0808" stroke="#3a0505" stroke-width="0.5"/><circle cx="865.2" cy="113.6" r="1.35" fill="#c81010" stroke="#3a0505" stroke-width="0.5"/><circle cx="862.8" cy="106.3" r="1.35" fill="#e01818" stroke="#3a0505" stroke-width="0.5"/><circle cx="873.0" cy="104.9" r="1.35" fill="#8a0808" stroke="#3a0505" stroke-width="0.5"/><circle cx="877.0" cy="106.9" r="1.35" fill="#d01414" stroke="#3a0505" stroke-width="0.5"/><circle cx="877.3" cy="110.9" r="1.35" fill="#d01414" stroke="#3a0505" stroke-width="0.5"/><circle cx="867.8" cy="108.1" r="1.35" fill="#b80c0c" stroke="#3a0505" stroke-width="0.5"/><circle cx="872.9" cy="111.2" r="1.35" fill="#8a0808" stroke="#3a0505" stroke-width="0.5"/><circle cx="872.1" cy="101.8" r="1.35" fill="#c81010" stroke="#3a0505" stroke-width="0.5"/><circle cx="866.7" cy="107.1" r="1.35" fill="#d81010" stroke="#3a0505" stroke-width="0.5"/><circle cx="880.2" cy="105.8" r="1.35" fill="#8a0808" stroke="#3a0505" stroke-width="0.5"/><circle cx="882.4" cy="112.9" r="1.35" fill="#d01414" stroke="#3a0505" stroke-width="0.5"/><circle cx="873.3" cy="109.9" r="1.35" fill="#e01818" stroke="#3a0505" stroke-width="0.5"/><circle cx="866.0" cy="110.8" r="1.35" fill="#b80c0c" stroke="#3a0505" stroke-width="0.5"/><circle cx="879.0" cy="108.0" r="1.35" fill="#d01414" stroke="#3a0505" stroke-width="0.5"/><circle cx="873.1" cy="103.7" r="1.35" fill="#d01414" stroke="#3a0505" stroke-width="0.5"/><circle cx="873.7" cy="113.7" r="1.35" fill="#b80c0c" stroke="#3a0505" stroke-width="0.5"/><circle cx="867.9" cy="106.4" r="1.35" fill="#d01414" stroke="#3a0505" stroke-width="0.5"/><circle cx="872.0" cy="112.2" r="1.35" fill="#b80c0c" stroke="#3a0505" stroke-width="0.5"/><circle cx="868.4" cy="110.0" r="1.35" fill="#d01414" stroke="#3a0505" stroke-width="0.5"/><circle cx="869.9" cy="105.9" r="1.35" fill="#e01818" stroke="#3a0505" stroke-width="0.5"/><circle cx="874.4" cy="109.2" r="1.35" fill="#c81010" stroke="#3a0505" stroke-width="0.5"/><circle cx="865.6" cy="101.0" r="1.35" fill="#8a0808" stroke="#3a0505" stroke-width="0.5"/><circle cx="868.3" cy="110.4" r="1.35" fill="#c81010" stroke="#3a0505" stroke-width="0.5"/><circle cx="873.2" cy="112.2" r="1.35" fill="#d81010" stroke="#3a0505" stroke-width="0.5"/><circle cx="867.9" cy="109.8" r="1.35" fill="#e01818" stroke="#3a0505" stroke-width="0.5"/><circle cx="872.9" cy="98.6" r="1.35" fill="#d01414" stroke="#3a0505" stroke-width="0.5"/><circle cx="865.0" cy="112.1" r="1.35" fill="#8a0808" stroke="#3a0505" stroke-width="0.5"/><circle cx="866.1" cy="101.7" r="1.35" fill="#d81010" stroke="#3a0505" stroke-width="0.5"/><circle cx="868.1" cy="107.6" r="1.35" fill="#d81010" stroke="#3a0505" stroke-width="0.5"/><circle cx="874.9" cy="111.1" r="1.35" fill="#d01414" stroke="#3a0505" stroke-width="0.5"/><circle cx="869.6" cy="108.3" r="1.35" fill="#d01414" stroke="#3a0505" stroke-width="0.5"/><circle cx="868.9" cy="103.1" r="1.35" fill="#c81010" stroke="#3a0505" stroke-width="0.5"/><circle cx="875.2" cy="110.0" r="1.35" fill="#c81010" stroke="#3a0505" stroke-width="0.5"/><circle cx="864.2" cy="106.2" r="1.35" fill="#b80c0c" stroke="#3a0505" stroke-width="0.5"/><circle cx="874.1" cy="107.0" r="1.35" fill="#8a0808" stroke="#3a0505" stroke-width="0.5"/><circle cx="865.2" cy="110.1" r="1.35" fill="#8a0808" stroke="#3a0505" stroke-width="0.5"/><circle cx="869.0" cy="113.6" r="1.35" fill="#d01414" stroke="#3a0505" stroke-width="0.5"/><circle cx="868.1" cy="109.3" r="1.35" fill="#c81010" stroke="#3a0505" stroke-width="0.5"/><circle cx="871.4" cy="114.3" r="1.35" fill="#8a0808" stroke="#3a0505" stroke-width="0.5"/><circle cx="860.9" cy="105.9" r="1.35" fill="#d01414" stroke="#3a0505" stroke-width="0.5"/><circle cx="865.7" cy="111.7" r="1.35" fill="#c81010" stroke="#3a0505" stroke-width="0.5"/><circle cx="871.2" cy="112.5" r="1.35" fill="#e01818" stroke="#3a0505" stroke-width="0.5"/><circle cx="868.9" cy="114.0" r="1.35" fill="#e01818" stroke="#3a0505" stroke-width="0.5"/><circle cx="870.7" cy="107.5" r="1.35" fill="#8a0808" stroke="#3a0505" stroke-width="0.5"/><circle cx="876.0" cy="106.3" r="1.35" fill="#d81010" stroke="#3a0505" stroke-width="0.5"/><circle cx="885.3" cy="102.2" r="1.35" fill="#b80c0c" stroke="#3a0505" stroke-width="0.5"/><circle cx="872.6" cy="104.7" r="1.35" fill="#e01818" stroke="#3a0505" stroke-width="0.5"/><circle cx="863.2" cy="116.1" r="1.35" fill="#d81010" stroke="#3a0505" stroke-width="0.5"/><circle cx="866.1" cy="100.8" r="1.35" fill="#d81010" stroke="#3a0505" stroke-width="0.5"/><circle cx="864.8" cy="108.3" r="1.35" fill="#b80c0c" stroke="#3a0505" stroke-width="0.5"/><circle cx="874.4" cy="110.2" r="1.35" fill="#d01414" stroke="#3a0505" stroke-width="0.5"/><circle cx="875.0" cy="104.1" r="1.35" fill="#c81010" stroke="#3a0505" stroke-width="0.5"/><circle cx="872.2" cy="111.0" r="1.35" fill="#e01818" stroke="#3a0505" stroke-width="0.5"/><circle cx="875.2" cy="118.7" r="1.35" fill="#d01414" stroke="#3a0505" stroke-width="0.5"/><circle cx="864.0" cy="101.4" r="1.35" fill="#c81010" stroke="#3a0505" stroke-width="0.5"/><circle cx="867.9" cy="112.7" r="1.35" fill="#c81010" stroke="#3a0505" stroke-width="0.5"/><circle cx="865.9" cy="113.1" r="1.35" fill="#8a0808" stroke="#3a0505" stroke-width="0.5"/><circle cx="868.4" cy="109.8" r="1.35" fill="#e01818" stroke="#3a0505" stroke-width="0.5"/><circle cx="868.6" cy="106.9" r="1.35" fill="#e01818" stroke="#3a0505" stroke-width="0.5"/><circle cx="873.3" cy="110.9" r="1.35" fill="#8a0808" stroke="#3a0505" stroke-width="0.5"/><circle cx="865.8" cy="111.7" r="1.35" fill="#d81010" stroke="#3a0505" stroke-width="0.5"/><circle cx="861.7" cy="107.6" r="1.35" fill="#d81010" stroke="#3a0505" stroke-width="0.5"/><circle cx="890.5" cy="107.5" r="1.3" fill="#d81010" stroke="#3a0505" stroke-width="0.5"/><circle cx="849" cy="112.5" r="1.3" fill="#100"/><circle cx="858" cy="129" r="1.3" fill="#100"/><circle cx="879" cy="124.5" r="1.3" fill="#100"/><circle cx="886" cy="120" r="1.3" fill="#100"/></g></svg>
<span class="abs ct" style="left:780.6px;top:192.7px;font-size:7.57px;color:#222">Darker points correspond to older data.</span>
<span class="abs ct" style="left:780.6px;top:202.4px;font-size:7.4px;color:#222">Scale radius = 10 um</span>
<span class="abs ct" style="left:780.6px;top:213.9px;font-size:7.4px;color:#222">Samples taken = 1034</span>
<span class="abs ct" style="left:780.6px;top:225.4px;font-size:7.3px;color:#222">Max deviation = 2.6 um</span>
<span class="abs ct" style="left:780.6px;top:236.6px;font-size:7.3px;color:#222">Last deviation = 1.3 um</span>
<span class="abs ct" style="left:780.6px;top:248.1px;font-size:7.2px;color:#222">Mean = 0.7 um</span>
<span class="abs ct" style="left:780.6px;top:258.7px;font-size:7.0px;color:#222">RMS = 0.79 um (x=0.57 um y=0.55 um)</span>
<div class="abs wb" style="left:781.8px;top:273.3px;width:177.2px;height:12.4px;line-height:13.400px;color:#222">Time interval = 10.0 seconds</div>
<div class="abs wb" style="left:781.8px;top:289.5px;width:177.2px;height:11.8px;line-height:10.2px;color:#555">Samples to be recorded = 8192</div>
<div class="abs wb" style="left:781.8px;top:305px;width:55.9px;height:11.2px;line-height:9.6px;color:#666">Clear</div>
<div class="abs wb" style="left:839.6px;top:305px;width:56.6px;height:11.2px;line-height:9.6px;color:#666">Replay</div>
<div class="abs wb" style="left:898.7px;top:305px;width:60.3px;height:11.2px;line-height:9.6px;color:#444">To ClipBoard</div>
<div class="abs wb" style="left:781.8px;top:320px;width:55.9px;height:11.2px;line-height:9.6px;color:#222">Normalize</div>
<div class="abs wb" style="left:839.6px;top:320px;width:56.6px;height:11.2px;line-height:9.6px;color:#222">Replay Fast</div>
<div class="abs wb" style="left:898.7px;top:320px;width:60.3px;height:11.2px;line-height:9.6px;color:#222">Save as bitmap</div>
<div class="abs wb" style="left:781.8px;top:333.9px;width:55.9px;height:11.2px;line-height:9.6px;color:#222">To Excel</div>
<div class="abs wb" style="left:839.6px;top:333.9px;width:56.6px;height:11.2px;line-height:9.6px;color:#222">Sequence Off</div>
<div class="abs wb" style="left:898.7px;top:333.9px;width:60.3px;height:11.2px;line-height:9.6px;color:#222">Export to Paint</div>
<div class="abs wb" style="left:781.8px;top:349.5px;width:55.9px;height:12.5px;line-height:10.9px;color:#555">To CSV</div>
<div class="abs wb sk" style="left:839.6px;top:349.5px;width:56.6px;height:12.5px;line-height:10.9px;color:#222">AutoScale</div>
<div class="abs wb" style="left:898.7px;top:349.5px;width:60.3px;height:12.5px;line-height:10.9px;color:#222">Enter Radius</div>
<!--/WANDER-->
<!--TASK-->
<div class="abs" style="left:971.4px;top:425.7px;width:36.2px;height:36.2px;border-radius:50%;background:#f1f6fc"></div>
<div class="abs" style="left:973.2px;top:427.5px;width:32.6px;height:32.6px;border-radius:50%;background:linear-gradient(170deg,#3584ee,#3f95f5 55%,#55b0fa);color:#d6eaff;font-size:9.2px;line-height:32px;text-align:center;letter-spacing:-0.2px">326:24</div>
<div class="abs" style="left:882px;top:596.8px;width:198px;height:57px;background:#2d2d2d"></div>
<div class="abs" style="left:1018px;top:609.5px;width:42px;height:44.3px;background:#3b3b3b"></div>
<svg class="abs" style="left:1018px;top:609px" width="42" height="45" viewBox="0 0 42 45"><polygon points="42,12 18,26 42,40" fill="#2a2a2a"/><polygon points="42,26 28,34 42,45" fill="#333"/></svg>
<div class="abs" style="left:1059.6px;top:596.8px;width:20.4px;height:57px;background:#4b4b54"></div>
<span class="abs ct" style="left:1064.5px;top:617px;font-size:13px;color:#d0703a;line-height:14px">»</span>
<span class="abs ct" style="left:906.5px;top:606.5px;font-size:8.7px;color:#a8a8a8">LAPTOP-OFITS6S6</span>
<svg class="abs" style="left:890px;top:604px" width="120" height="42" viewBox="890 604 120 42" fill="none" stroke="#c8683a" stroke-width="0.9">
<circle cx="898" cy="610.2" r="1.9"/><path d="M894.6 616.9c0-3 1.4-4.4 3.4-4.4s3.4 1.4 3.4 4.4"/>
<rect x="892" y="630" width="11" height="8" rx="1"/><path d="M895 640.5h5"/>
<circle cx="934" cy="632" r="2.2"/><path d="M929.5 640.5c0-3.4 2-5 4.5-5s4.500 1.600 4.500 5"/><circle cx="941" cy="638.500" r="2.400" stroke="#c81e46"/>
<path d="M964 629l2.500 9 2-3.500 3.500 3 1.200-1.400-3.400-3 3.600-1.600z"/>
<circle cx="998.5" cy="634.500" r="5.500"/><path d="M992 640.500h13"/>
</svg>
<svg class="abs" style="left:776px;top:603px;filter:drop-shadow(0.9px 1px 0.7px rgba(70,70,70,.75))" width="52" height="44" viewBox="776 603 52 44">
<path d="M794.800 606.400c-8.300 0-15 5.300-15 11.800 0 3.700 2.100 6.900 5.500 9.100l-1.400 4.200 4.900-2.500c1.900.600 3.900 1 6 1 8.300 0 15-5.300 15-11.800s-6.700-11.800-15-11.800z" fill="#f8f8f8" fill-opacity=".94"/>
<path d="M809.800 619.100c-7.100 0-12.800 4.600-12.800 10.400s5.700 10.400 12.800 10.400c1.500 0 3-.200 4.400-.600l4.300 2.300-1.200-3.700c3.200-1.900 5.300-4.900 5.300-8.400 0-5.800-5.700-10.400-12.800-10.400z" fill="#fdfdfd" stroke="#8c8c8c" stroke-opacity=".55" stroke-width=".8"/>
<circle cx="789.700" cy="614.500" r="1.900" fill="#c9cfa5"/><circle cx="800.700" cy="614.500" r="1.900" fill="#c9cfa5"/>
<circle cx="805.300" cy="626.200" r="1.700" fill="#8a9a6a"/><circle cx="814.300" cy="626.200" r="1.700" fill="#8a9a6a"/></svg>
<span class="abs" id="wm" style="left:829.5px;top:608.2px;transform-origin:0 0;transform:scaleY(1.02);font-family:'Liberation Sans','Noto Sans CJK SC',sans-serif;font-weight:400;font-size:27.3px;line-height:40px;letter-spacing:-0.4px;color:#fff;white-space:pre;text-shadow:0.8px 1px 0.6px rgba(20,20,20,.85),0 0 1.5px rgba(0,0,0,.4)">上海镱镭飞秒激光</span>
<div class="abs" style="left:0;top:654.2px;width:1080px;height:21px;background:#1e390b"></div>
<div class="abs" style="left:81.500px;top:673.2px;width:108px;height:2px;background:#a9d99a"></div><div class="abs" style="left:195.500px;top:673.2px;width:106.500px;height:2px;background:#a9d99a"></div>
<span class="abs ct" style="left:97.800px;top:658.300px;font-size:9.050px;color:#f4f4f4">C:\Users\Admin\De...</span>
<span class="abs ct" style="left:212px;top:658.500px;font-size:8.650px;color:#f4f4f4">DataRay 8.0D81:Liv...</span>
<span class="abs ct" style="left:1005px;top:658.700px;font-size:8.300px;color:#f0f0f0">0:01:58</span>
<span class="abs ct" style="left:984.500px;top:657.600px;font-size:9.500px;font-weight:bold;color:#f0f0f0;font-family:'Liberation Sans','Noto Sans CJK SC',sans-serif">中</span>
<svg class="abs" style="left:0;top:654px" width="1080" height="21" viewBox="0 654 1080 21">
<g fill="#f2f2f2"><path d="M6.500 660.200l5-.700v4.700h-5zM12.200 659.400l6.200-.900v5.700h-6.200zM6.500 664.900h5v4.700l-5-.700zM12.200 664.900h6.200v5.700l-6.200-.900z"/></g>
<g><ellipse cx="40.500" cy="663.500" rx="5.200" ry="3.600" fill="#e8eef4"/><circle cx="38.500" cy="662.800" r="1.300" fill="#d04040"/><circle cx="42.300" cy="662.600" r="1.200" fill="#4a8ad8"/><path d="M41 666l3.500 4.200" stroke="#3a9ad8" stroke-width="1.800"/><path d="M36.500 666.500l-1.200 2.500" stroke="#d84040" stroke-width="1.300"/></g>
<g fill="none" stroke="#ff8a12" stroke-width="1.900"><circle cx="67.300" cy="662.800" r="3.100"/><path d="M65.200 665.400l-3.700 4.200" stroke-linecap="round"/></g>
<path d="M86.200 659.300h4.300l1.900 1.400v9.300h-6.200z" fill="#f6d86a"/><path d="M86.200 659.300h1.600v10.700h-1.600z" fill="#e8b83a"/>
<g><circle cx="203.800" cy="664.500" r="5.200" fill="#1a8a3a"/><circle cx="203.800" cy="664.500" r="5.200" fill="none" stroke="#2a50c8" stroke-width="1.100"/><circle cx="203.800" cy="664.500" r="3.200" fill="#e8e020"/><circle cx="203.800" cy="664.500" r="1.700" fill="#e02020"/></g>
<g><circle cx="855.800" cy="664.400" r="5" fill="#f0a8b0"/><circle cx="855.800" cy="664.400" r="2" fill="#8aa8e0"/><path d="M855.800 659v11M850.500 664.400h10.600M852 660.600l7.600 7.600M859.600 660.600l-7.600 7.600" stroke="#f8d0d4" stroke-width=".7"/></g>
<g fill="none" stroke="#ff8a12" stroke-width="1.700"><circle cx="873.300" cy="663" r="2.800"/><path d="M871.400 665.300l-3.200 3.700" stroke-linecap="round"/></g>
<rect x="883.800" y="659" width="11.200" height="11" rx="1.300" fill="#f0581c"/><path d="M885.300 660.800h4l4.200 4.600-2 1.800z" fill="#fff"/><rect x="890" y="665.800" width="4" height="3.600" fill="#d8e8f8"/><circle cx="892" cy="665.300" r="1.100" fill="#3a78c8"/>
<ellipse cx="906" cy="664.200" rx="4.300" ry="5.800" fill="#1e8ae8"/><path d="M904 661.800l4 4-2 1.800v-7l2 1.800-4 4" fill="none" stroke="#fff" stroke-width=".8"/>
<g fill="#f0f0f0"><rect x="919" y="661.400" width="10" height="5.400" rx=".6"/><rect x="917.200" y="662.200" width="2.200" height="1.400"/><path d="M917.400 660.400h2.600v1.200h-2.600z"/></g>
<g fill="none" stroke-linecap="round"><path d="M936.200 668.500a8.200 8.200 0 0 1 8.200-8.200" stroke="#8a9a88" stroke-width="1"/><path d="M938.800 668.500a5.600 5.600 0 0 1 5.600-5.600" stroke="#a8b4a8" stroke-width="1"/><path d="M941.400 668.500a3 3 0 0 1 3-3" stroke="#e8e8e8" stroke-width="1.100"/><circle cx="944" cy="668.300" r=".8" fill="#fff"/></g>
<g fill="none"><path d="M959.200 661a4.700 4.700 0 1 1-6.300 1.200" stroke="#28b4dc" stroke-width="2"/><path d="M951 660.200l3.600.300-.600 3.600z" fill="#28b4dc"/></g>
<g fill="none" stroke="#eee" stroke-width=".9"><path d="M968.200 662.800h2l2.600-2.600v8.400l-2.600-2.600h-2z"/><path d="M974.800 662.300a3 3 0 0 1 0 4.200M976.600 660.800a5.200 5.200 0 0 1 0 7.200M978.400 659.500a7.300 7.300 0 0 1 0 9.800"/></g>
<path d="M1051.500 659.500h10.500v8h-4.700l-2.600 2.300v-2.300h-3.200z" fill="none" stroke="#f0f0f0" stroke-width="1"/>
</svg>
<div class="abs" style="left:1078.300px;top:45px;width:1px;height:552px;background:#dedede"></div>
<!--/TASK-->
</div></body></html>
